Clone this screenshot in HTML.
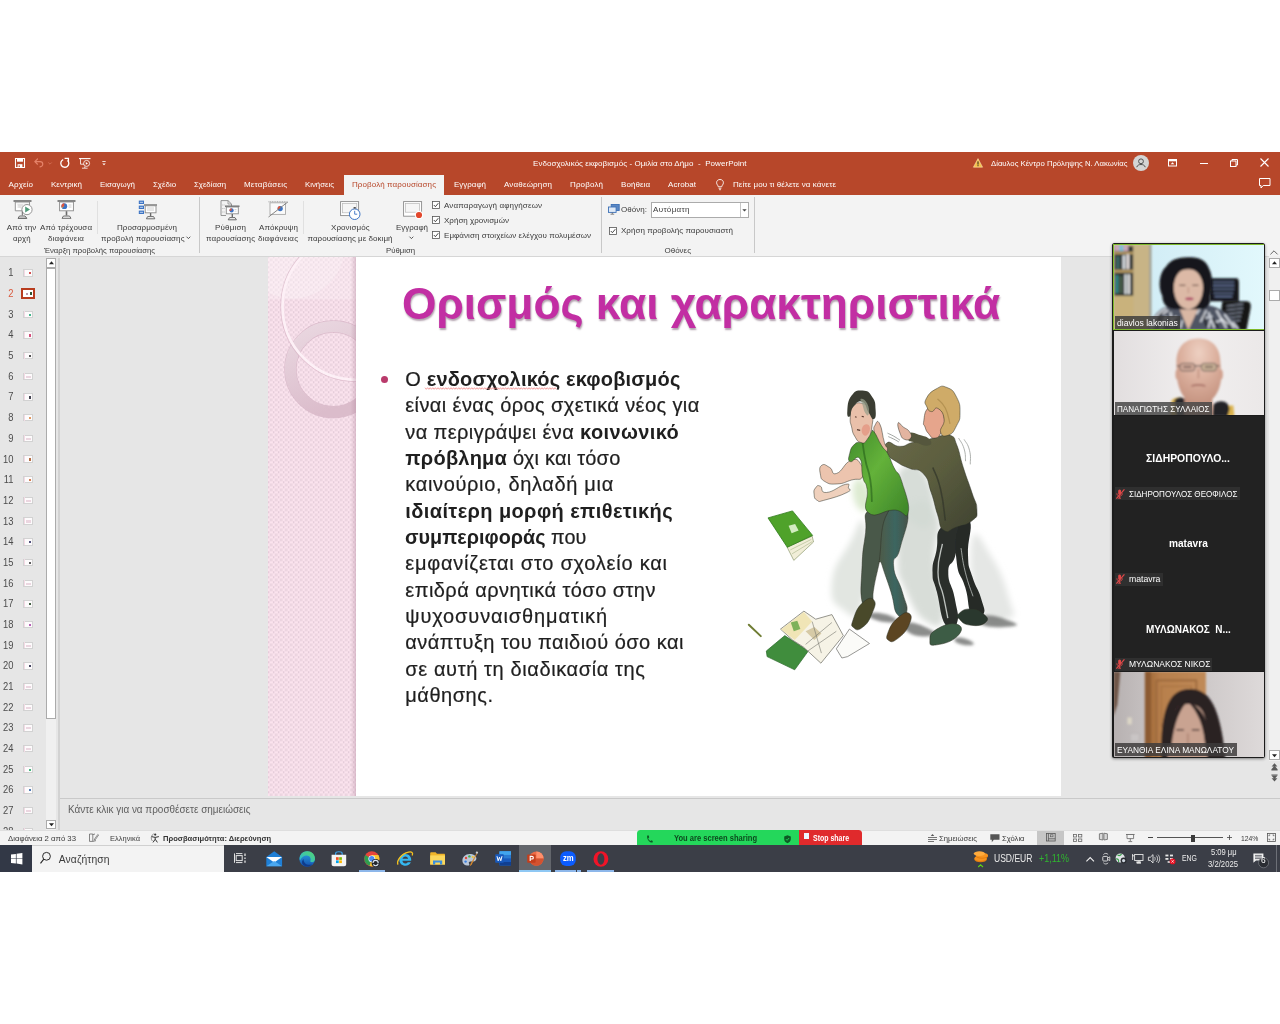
<!DOCTYPE html>
<html lang="el"><head><meta charset="utf-8"><title>Ενδοσχολικός εκφοβισμός - PowerPoint</title>
<style>
*{box-sizing:border-box;margin:0;padding:0}
html,body{width:1280px;height:1024px;background:#fff;overflow:hidden}
body{position:relative;font-family:"Liberation Sans",sans-serif;font-size:8px;color:#444}
.a{position:absolute;white-space:pre}
svg{overflow:visible}
b{-webkit-text-stroke:0}
</style></head><body>
<div class="a" id="root" style="left:0;top:0;width:1280px;height:1024px;will-change:transform">
<div class="a" style="left:0px;top:152px;width:1280px;height:43px;background:#b7472a;"></div>
<div class="a" style="left:0px;top:195px;width:1280px;height:61px;background:#f3f3f3;"></div>
<div class="a" style="left:0px;top:256px;width:1280px;height:574px;background:#e6e6e6;"></div>
<svg class="a" style="left:15px;top:158px;" width="10" height="10" viewBox="0 0 10 10"><path d="M0.5 0.5h9v9h-9z" fill="none" stroke="#fff" stroke-width="1.1"/><rect x="2" y="0.5" width="6" height="3.2" fill="#fff"/><rect x="2.6" y="6.2" width="4.8" height="3.3" fill="#fff"/><rect x="3.6" y="7.4" width="1.2" height="1.6" fill="#b7472a"/></svg>
<svg class="a" style="left:34px;top:158px;" width="11" height="10" viewBox="0 0 11 10"><path d="M3.5 1 L0.8 3.6 L3.5 6.2 M1 3.6 H6.2 C9.5 3.6 9.8 8.6 6 8.8" fill="none" stroke="#e58369" stroke-width="1.2" stroke-linecap="round" stroke-linejoin="round"/></svg>
<svg class="a" style="left:47.5px;top:161.5px;" width="4" height="3" viewBox="0 0 4 3"><path d="M0.3 0.5 L2 2.2 L3.7 0.5" fill="none" stroke="#d9775d" stroke-width="0.8"/></svg>
<svg class="a" style="left:60px;top:158px;" width="10" height="10" viewBox="0 0 10 10"><path d="M3.2 1.6 A4 4 0 1 0 7.6 2.4" fill="none" stroke="#fff" stroke-width="1.3"/><path d="M4.6 0.3 H8.4 V4.1" fill="none" stroke="#fff" stroke-width="1.3"/></svg>
<svg class="a" style="left:78.5px;top:158px;" width="12" height="11" viewBox="0 0 12 11"><path d="M0 0.6 H11.5" stroke="#fff" stroke-width="1.1"/><path d="M1.5 1 V6.2 H5" fill="none" stroke="#fff" stroke-width="0.8"/><circle cx="7.6" cy="5.4" r="3" fill="none" stroke="#fff" stroke-width="0.8"/><path d="M6.8 4 L9 5.4 L6.8 6.8z" fill="#fff"/><path d="M3 10.2 H8.6 M5.8 8.5 V10" stroke="#fff" stroke-width="0.8"/></svg>
<svg class="a" style="left:101.5px;top:160.5px;" width="4" height="6" viewBox="0 0 4 6"><path d="M0.3 0.5 H3.7" stroke="#fff" stroke-width="0.8"/><path d="M0.3 2.4 H3.7 L2 4.3z" fill="#fff"/></svg>
<div class="a" style="left:533.00px;top:159.53px;font-size:8px;line-height:8px;color:#fff;letter-spacing:0.049px;">Ενδοσχολικός εκφοβισμός - Ομιλία στο Δήμο  -  PowerPoint</div>
<svg class="a" style="left:972.5px;top:158px;" width="10" height="10" viewBox="0 0 10 10"><path d="M5 0.6 L9.6 9.2 H0.4z" fill="#f5c04a" stroke="#fff3c8" stroke-width="0.5"/><rect x="4.5" y="3.4" width="1" height="3.2" fill="#222"/><rect x="4.5" y="7.2" width="1" height="1" fill="#222"/></svg>
<div class="a" style="left:990.50px;top:159.53px;font-size:8px;line-height:8px;color:#fff;transform:scaleX(0.9667);transform-origin:0 0;">Δίαυλος Κέντρο Πρόληψης Ν. Λακωνίας</div>
<svg class="a" style="left:1133px;top:155px;" width="16" height="16" viewBox="0 0 16 16"><circle cx="8" cy="8" r="8" fill="#d4d4d4"/><circle cx="8" cy="6.3" r="2.4" fill="none" stroke="#444" stroke-width="0.9"/><path d="M3.8 12.2 C4.2 8.6 11.8 8.6 12.2 12.2" fill="none" stroke="#444" stroke-width="0.9"/></svg>
<svg class="a" style="left:1168px;top:158.5px;" width="9" height="8" viewBox="0 0 9 8"><rect x="0.5" y="0.5" width="8" height="6.5" fill="none" stroke="#fff" stroke-width="1"/><rect x="0.5" y="0.5" width="8" height="1.8" fill="#fff"/><path d="M4.5 3.2 L6.3 5.2 H2.7z" fill="#fff"/></svg>
<div class="a" style="left:1200px;top:162.5px;width:7.5px;height:1px;background:#fff;"></div>
<svg class="a" style="left:1230px;top:158.5px;" width="8" height="8" viewBox="0 0 8 8"><rect x="0.5" y="2" width="5.5" height="5.5" fill="none" stroke="#fff" stroke-width="1"/><path d="M2 2 V0.5 H7.5 V6 H6" fill="none" stroke="#fff" stroke-width="1"/></svg>
<svg class="a" style="left:1260px;top:158px;" width="9" height="9" viewBox="0 0 9 9"><path d="M0.5 0.5 L8.5 8.5 M8.5 0.5 L0.5 8.5" stroke="#fff" stroke-width="1.1"/></svg>
<svg class="a" style="left:1258.5px;top:178px;" width="12" height="11" viewBox="0 0 12 11"><path d="M0.5 0.5 H11 V7.5 H4.2 L2 10 V7.5 H0.5z" fill="none" stroke="#fff" stroke-width="1"/></svg>
<div class="a" style="left:344px;top:175px;width:100px;height:20.5px;background:#f3f3f3;"></div>
<div class="a" style="left:8.50px;top:181.23px;font-size:8px;line-height:8px;color:#fff;letter-spacing:0.124px;">Αρχείο</div>
<div class="a" style="left:51.00px;top:181.23px;font-size:8px;line-height:8px;color:#fff;letter-spacing:0.023px;">Κεντρική</div>
<div class="a" style="left:100.00px;top:181.23px;font-size:8px;line-height:8px;color:#fff;transform:scaleX(0.9895);transform-origin:0 0;">Εισαγωγή</div>
<div class="a" style="left:153.00px;top:181.23px;font-size:8px;line-height:8px;color:#fff;transform:scaleX(0.9833);transform-origin:0 0;">Σχέδιο</div>
<div class="a" style="left:194.00px;top:181.23px;font-size:8px;line-height:8px;color:#fff;transform:scaleX(0.9711);transform-origin:0 0;">Σχεδίαση</div>
<div class="a" style="left:244.00px;top:181.23px;font-size:8px;line-height:8px;color:#fff;letter-spacing:0.193px;">Μεταβάσεις</div>
<div class="a" style="left:305.00px;top:181.23px;font-size:8px;line-height:8px;color:#fff;transform:scaleX(0.9765);transform-origin:0 0;">Κινήσεις</div>
<div class="a" style="left:454.00px;top:181.23px;font-size:8px;line-height:8px;color:#fff;transform:scaleX(0.9954);transform-origin:0 0;">Εγγραφή</div>
<div class="a" style="left:504.00px;top:181.23px;font-size:8px;line-height:8px;color:#fff;letter-spacing:0.171px;">Αναθεώρηση</div>
<div class="a" style="left:570.00px;top:181.23px;font-size:8px;line-height:8px;color:#fff;letter-spacing:0.146px;">Προβολή</div>
<div class="a" style="left:621.00px;top:181.23px;font-size:8px;line-height:8px;color:#fff;letter-spacing:0.058px;">Βοήθεια</div>
<div class="a" style="left:668.00px;top:181.23px;font-size:8px;line-height:8px;color:#fff;letter-spacing:0.072px;">Acrobat</div>
<div class="a" style="left:733.00px;top:181.23px;font-size:8px;line-height:8px;color:#fff;letter-spacing:0.068px;">Πείτε μου τι θέλετε να κάνετε</div>
<div class="a" style="left:352.00px;top:181.23px;font-size:8px;line-height:8px;color:#b7472a;letter-spacing:0.092px;">Προβολή παρουσίασης</div>
<svg class="a" style="left:715.5px;top:178.5px;" width="8" height="12" viewBox="0 0 8 12"><path d="M4 0.5 C1.8 0.5 0.6 2 0.6 3.7 C0.6 5.4 2 6.2 2.3 7.8 H5.7 C6 6.2 7.4 5.4 7.4 3.7 C7.4 2 6.2 0.5 4 0.5z" fill="none" stroke="#fff" stroke-width="0.9"/><path d="M2.6 9.3 H5.4 M3 10.7 H5" stroke="#fff" stroke-width="0.8"/></svg>
<div class="a" style="left:0px;top:255.5px;width:1280px;height:1px;background:#d6d6d6;"></div>
<div class="a" style="left:96.5px;top:201px;width:1px;height:33px;background:#e0e0e0;"></div>
<div class="a" style="left:198.5px;top:197px;width:1px;height:56px;background:#c8c8c8;"></div>
<div class="a" style="left:302.5px;top:201px;width:1px;height:33px;background:#e0e0e0;"></div>
<div class="a" style="left:600.5px;top:197px;width:1px;height:56px;background:#c8c8c8;"></div>
<div class="a" style="left:753.5px;top:197px;width:1px;height:56px;background:#c8c8c8;"></div>
<div class="a" style="left:6.80px;top:223.83px;font-size:8px;line-height:8px;color:#3a3a3a;letter-spacing:0.061px;">Από την</div>
<div class="a" style="left:13.00px;top:235.03px;font-size:8px;line-height:8px;color:#3a3a3a;transform:scaleX(0.9818);transform-origin:0 0;">αρχή</div>
<div class="a" style="left:40.00px;top:223.83px;font-size:8px;line-height:8px;color:#3a3a3a;letter-spacing:0.075px;">Από τρέχουσα</div>
<div class="a" style="left:48.00px;top:235.03px;font-size:8px;line-height:8px;color:#3a3a3a;letter-spacing:0.170px;">διαφάνεια</div>
<div class="a" style="left:117.00px;top:223.83px;font-size:8px;line-height:8px;color:#3a3a3a;letter-spacing:0.041px;">Προσαρμοσμένη</div>
<div class="a" style="left:101.00px;top:235.03px;font-size:8px;line-height:8px;color:#3a3a3a;letter-spacing:0.079px;">προβολή παρουσίασης</div>
<svg class="a" style="left:186.2px;top:236.0px;" width="5" height="4" viewBox="0 0 5 4"><path d="M0.5 0.7 L2.4 2.6 L4.3 0.7" fill="none" stroke="#444" stroke-width="0.9"/></svg>
<div class="a" style="left:44.00px;top:247.03px;font-size:8px;line-height:8px;color:#3a3a3a;transform:scaleX(0.9599);transform-origin:0 0;">Έναρξη προβολής παρουσίασης</div>
<div class="a" style="left:215.00px;top:223.83px;font-size:8px;line-height:8px;color:#3a3a3a;letter-spacing:0.178px;">Ρύθμιση</div>
<div class="a" style="left:206.00px;top:235.03px;font-size:8px;line-height:8px;color:#3a3a3a;letter-spacing:0.101px;">παρουσίασης</div>
<div class="a" style="left:259.00px;top:223.83px;font-size:8px;line-height:8px;color:#3a3a3a;letter-spacing:0.088px;">Απόκρυψη</div>
<div class="a" style="left:258.00px;top:235.03px;font-size:8px;line-height:8px;color:#3a3a3a;letter-spacing:0.168px;">διαφάνειας</div>
<div class="a" style="left:331.00px;top:223.83px;font-size:8px;line-height:8px;color:#3a3a3a;letter-spacing:0.067px;">Χρονισμός</div>
<div class="a" style="left:307.50px;top:235.03px;font-size:8px;line-height:8px;color:#3a3a3a;letter-spacing:0.033px;">παρουσίασης με δοκιμή</div>
<div class="a" style="left:396.00px;top:223.83px;font-size:8px;line-height:8px;color:#3a3a3a;transform:scaleX(0.9954);transform-origin:0 0;">Εγγραφή</div>
<svg class="a" style="left:409px;top:235.8px;" width="5" height="4" viewBox="0 0 5 4"><path d="M0.5 0.7 L2.4 2.6 L4.3 0.7" fill="none" stroke="#444" stroke-width="0.9"/></svg>
<div class="a" style="left:385.50px;top:247.03px;font-size:8px;line-height:8px;color:#3a3a3a;transform:scaleX(0.9688);transform-origin:0 0;">Ρύθμιση</div>
<svg class="a" style="left:432.3px;top:200.6px;" width="8" height="8" viewBox="0 0 8 8"><rect x="0.5" y="0.5" width="7" height="7" fill="#fff" stroke="#555" stroke-width="0.8"/><path d="M1.8 4 L3.4 5.7 L6.3 2.2" fill="none" stroke="#333" stroke-width="0.9"/></svg>
<svg class="a" style="left:432.3px;top:216px;" width="8" height="8" viewBox="0 0 8 8"><rect x="0.5" y="0.5" width="7" height="7" fill="#fff" stroke="#555" stroke-width="0.8"/><path d="M1.8 4 L3.4 5.7 L6.3 2.2" fill="none" stroke="#333" stroke-width="0.9"/></svg>
<svg class="a" style="left:432.3px;top:231.4px;" width="8" height="8" viewBox="0 0 8 8"><rect x="0.5" y="0.5" width="7" height="7" fill="#fff" stroke="#555" stroke-width="0.8"/><path d="M1.8 4 L3.4 5.7 L6.3 2.2" fill="none" stroke="#333" stroke-width="0.9"/></svg>
<div class="a" style="left:444.00px;top:201.53px;font-size:8px;line-height:8px;color:#3a3a3a;letter-spacing:0.130px;">Αναπαραγωγή αφηγήσεων</div>
<div class="a" style="left:444.00px;top:216.93px;font-size:8px;line-height:8px;color:#3a3a3a;letter-spacing:0.020px;">Χρήση χρονισμών</div>
<div class="a" style="left:444.00px;top:232.33px;font-size:8px;line-height:8px;color:#3a3a3a;letter-spacing:0.064px;">Εμφάνιση στοιχείων ελέγχου πολυμέσων</div>
<svg class="a" style="left:608px;top:204px;" width="12" height="11" viewBox="0 0 12 11"><rect x="3.2" y="0.5" width="8" height="6" fill="#5b88c4" stroke="#3b6fb5" stroke-width="0.9"/><rect x="0.5" y="3" width="7.6" height="5.4" fill="#dfe9f6" stroke="#3b6fb5" stroke-width="0.9"/><path d="M2.5 10.2 H6.2 M4.3 8.6 V10" stroke="#666" stroke-width="0.8"/></svg>
<div class="a" style="left:621.00px;top:205.53px;font-size:8px;line-height:8px;color:#3a3a3a;letter-spacing:0.041px;">Οθόνη:</div>
<div class="a" style="left:650.5px;top:202.2px;width:98.5px;height:15.5px;background:#fff;border:1px solid #ababab"></div>
<div class="a" style="left:739.5px;top:203px;width:1px;height:14px;background:#c6c6c6;"></div>
<svg class="a" style="left:741.5px;top:208.5px;" width="5" height="3" viewBox="0 0 5 3"><path d="M0.3 0.3 H4.7 L2.5 2.6z" fill="#444"/></svg>
<div class="a" style="left:653.00px;top:205.53px;font-size:8px;line-height:8px;color:#3a3a3a;letter-spacing:0.334px;">Αυτόματη</div>
<svg class="a" style="left:609px;top:226.6px;" width="8" height="8" viewBox="0 0 8 8"><rect x="0.5" y="0.5" width="7" height="7" fill="#fff" stroke="#555" stroke-width="0.8"/><path d="M1.8 4 L3.4 5.7 L6.3 2.2" fill="none" stroke="#333" stroke-width="0.9"/></svg>
<div class="a" style="left:621.00px;top:226.83px;font-size:8px;line-height:8px;color:#3a3a3a;letter-spacing:0.033px;">Χρήση προβολής παρουσιαστή</div>
<div class="a" style="left:664.50px;top:247.03px;font-size:8px;line-height:8px;color:#3a3a3a;letter-spacing:-0.009px;">Οθόνες</div>
<svg class="a" style="left:12.5px;top:200px;" width="20" height="20" viewBox="0 0 20 20"><path d="M0.5 1 H18.5" stroke="#6a6a6a" stroke-width="1.6"/>
<path d="M2.3 2 V10.8 H9" fill="#fff" stroke="#8a8a8a" stroke-width="0.9"/><path d="M2.3 2 H16.5 V5" fill="none" stroke="#8a8a8a" stroke-width="0.9"/>
<path d="M4.5 5 H10 M4.5 7 H8.5" stroke="#c4c4c4" stroke-width="0.8"/>
<circle cx="14" cy="9.6" r="5.1" fill="#fff" stroke="#8a8a8a" stroke-width="0.9"/><path d="M12.2 6.6 L17 9.6 L12.2 12.6z" fill="#4e9a78"/>
<path d="M9.3 11.5 V15.5 M5 18.3 H13.8 M6.5 16 H12 L13.8 18.3 H5z" fill="none" stroke="#6a6a6a" stroke-width="1"/></svg>
<svg class="a" style="left:56.5px;top:200px;" width="20" height="20" viewBox="0 0 20 20"><path d="M0.5 1 H18.5" stroke="#6a6a6a" stroke-width="1.6"/>
<rect x="2.6" y="2" width="13.8" height="8.8" fill="#fff" stroke="#8a8a8a" stroke-width="0.9"/>
<circle cx="7.3" cy="6.2" r="2.9" fill="#3b73c4"/><path d="M7.3 6.2 L7.3 3.3 A2.9 2.9 0 0 0 4.6 7.3z" fill="#e2553a"/><path d="M7.3 6.2 L4.6 7.3 A2.9 2.9 0 0 0 5 8z" fill="#f2b43c"/>
<path d="M11.5 5 H14.5 M11.5 7 H14.5" stroke="#c4c4c4" stroke-width="0.8"/>
<path d="M9.5 11.2 V15.5" stroke="#6a6a6a" stroke-width="1.6"/><path d="M6.5 16 H12.5 L14 18.3 H5z" fill="none" stroke="#6a6a6a" stroke-width="1"/></svg>
<svg class="a" style="left:137.5px;top:200px;" width="20" height="20" viewBox="0 0 20 20"><rect x="0.8" y="0.6" width="5.2" height="3.4" fill="#3b73c4"/><rect x="0.8" y="5.6" width="5.2" height="3.4" fill="#3b73c4"/><rect x="0.8" y="10.6" width="5.2" height="3.4" fill="#3b73c4"/>
<path d="M1.8 2.3 H5 M1.8 7.3 H5 M1.8 12.3 H5" stroke="#fff" stroke-width="0.7"/>
<path d="M6 5 H19" stroke="#6a6a6a" stroke-width="1.3"/><rect x="7.2" y="5.8" width="10.8" height="7" fill="#fff" stroke="#8a8a8a" stroke-width="0.9"/>
<path d="M9 8 H16 M9 10 H16" stroke="#c4c4c4" stroke-width="0.8"/>
<path d="M12.6 13 V16" stroke="#6a6a6a" stroke-width="1.4"/><path d="M9.6 16.6 H15.6 L16.8 18.8 H8.4z" fill="none" stroke="#6a6a6a" stroke-width="1"/></svg>
<svg class="a" style="left:220px;top:199.5px;" width="20" height="21" viewBox="0 0 20 21"><path d="M1 0.6 H8 L11.5 4 V7" fill="none" stroke="#8a8a8a" stroke-width="0.9"/><path d="M1 0.6 V15.5 H6" fill="none" stroke="#8a8a8a" stroke-width="0.9"/><path d="M8 0.6 V4 H11.5" fill="none" stroke="#8a8a8a" stroke-width="0.8"/>
<path d="M2.5 5 H4.5 M2.5 8.5 H4.5 M2.5 12 H4.5" stroke="#8a8a8a" stroke-width="0.8" stroke-dasharray="0.8 0.8"/>
<path d="M5 6.2 H19.5" stroke="#6a6a6a" stroke-width="1.4"/><rect x="6.3" y="7" width="12" height="6.8" fill="#fff" stroke="#8a8a8a" stroke-width="0.9"/>
<circle cx="11.6" cy="10.4" r="2.1" fill="#3b73c4"/><path d="M11.6 10.4 V8.3 A2.1 2.1 0 0 0 9.6 11.1z" fill="#e2553a"/><path d="M14.5 9.5 H16.5 M14.5 11.2 H16.5" stroke="#c4c4c4" stroke-width="0.7"/>
<path d="M12.3 14 V17" stroke="#6a6a6a" stroke-width="1.4"/><path d="M9.6 17.6 H15 L16.4 19.8 H8.2z" fill="none" stroke="#6a6a6a" stroke-width="1"/></svg>
<svg class="a" style="left:268px;top:201px;" width="21" height="17" viewBox="0 0 21 17"><path d="M0.5 0.8 H19" stroke="#9a9a9a" stroke-width="1" stroke-dasharray="1 0.7"/><rect x="2" y="1.8" width="15.5" height="11.6" fill="#fafafa" stroke="#a8a8a8" stroke-width="0.9"/>
<circle cx="12.2" cy="7.6" r="2.6" fill="#3b73c4"/><path d="M12.2 7.6 V5 A2.6 2.6 0 0 0 9.7 8.4z" fill="#e2553a"/>
<path d="M0.5 16 L20 0.8" stroke="#777" stroke-width="0.9"/></svg>
<svg class="a" style="left:340px;top:201px;" width="22" height="20" viewBox="0 0 22 20"><rect x="0.6" y="0.6" width="18" height="14" fill="#fff" stroke="#8a8a8a" stroke-width="0.9"/><rect x="2.4" y="2.4" width="14.4" height="9.4" fill="#f6f6f6" stroke="#b8b8b8" stroke-width="0.7"/>
<circle cx="14.7" cy="13.2" r="5.3" fill="#fff" stroke="#3b73c4" stroke-width="1"/><path d="M14.7 9.8 V13.2 H17.2" fill="none" stroke="#3b73c4" stroke-width="0.9"/><rect x="13.6" y="6" width="2.2" height="1.6" fill="#555"/></svg>
<svg class="a" style="left:402.5px;top:201px;" width="22" height="19" viewBox="0 0 22 19"><rect x="0.6" y="0.6" width="18" height="14.6" fill="#fff" stroke="#8a8a8a" stroke-width="0.9"/><rect x="2.6" y="2.6" width="14" height="8.6" fill="#f6f6f6" stroke="#b8b8b8" stroke-width="0.7"/>
<circle cx="16" cy="14" r="4.2" fill="#fff"/><circle cx="16" cy="14" r="3.1" fill="#e2482d"/></svg>
<div class="a" style="left:0;top:256px;width:60px;height:574px;overflow:hidden">
<div class="a" style="left:0;width:13.4px;text-align:right;top:12.40px;font-size:10.2px;line-height:10.2px;color:#4c4c4c;transform:scaleX(0.92);transform-origin:100% 50%">1</div>
<div class="a" style="left:23.2px;top:13.30px;width:9.6px;height:7.4px;border:0.8px solid #d2d2d2;background:#fdfbfc"></div>
<div class="a" style="left:28.6px;top:16.30px;width:2.4px;height:2.2px;background:#c33;opacity:0.85"></div>
<div class="a" style="left:23.8px;top:13.90px;width:1.2px;height:6px;background:#f3d9e4"></div>
<div class="a" style="left:0;width:13.4px;text-align:right;top:33.08px;font-size:10.2px;line-height:10.2px;color:#d9593d;transform:scaleX(0.92);transform-origin:100% 50%">2</div>
<div class="a" style="left:21.2px;top:32.08px;width:13.6px;height:11.2px;border:2px solid #b83c1e;background:#fff"></div>
<div class="a" style="left:26px;top:36.58px;width:2px;height:2px;background:#b9a;"></div><div class="a" style="left:30px;top:36.38px;width:1.6px;height:2.4px;background:#353;"></div>
<div class="a" style="left:0;width:13.4px;text-align:right;top:53.76px;font-size:10.2px;line-height:10.2px;color:#4c4c4c;transform:scaleX(0.92);transform-origin:100% 50%">3</div>
<div class="a" style="left:23.2px;top:54.66px;width:9.6px;height:7.4px;border:0.8px solid #d2d2d2;background:#fdfbfc"></div>
<div class="a" style="left:28.6px;top:57.66px;width:2.4px;height:2.2px;background:#2a7;opacity:0.85"></div>
<div class="a" style="left:23.8px;top:55.26px;width:1.2px;height:6px;background:#f3d9e4"></div>
<div class="a" style="left:0;width:13.4px;text-align:right;top:74.44px;font-size:10.2px;line-height:10.2px;color:#4c4c4c;transform:scaleX(0.92);transform-origin:100% 50%">4</div>
<div class="a" style="left:23.2px;top:75.34px;width:9.6px;height:7.4px;border:0.8px solid #d2d2d2;background:#fdfbfc"></div>
<div class="a" style="left:28.6px;top:78.34px;width:2.4px;height:2.2px;background:#c36;opacity:0.85"></div>
<div class="a" style="left:23.8px;top:75.94px;width:1.2px;height:6px;background:#f3d9e4"></div>
<div class="a" style="left:0;width:13.4px;text-align:right;top:95.12px;font-size:10.2px;line-height:10.2px;color:#4c4c4c;transform:scaleX(0.92);transform-origin:100% 50%">5</div>
<div class="a" style="left:23.2px;top:96.02px;width:9.6px;height:7.4px;border:0.8px solid #d2d2d2;background:#fdfbfc"></div>
<div class="a" style="left:28.6px;top:99.02px;width:2.4px;height:2.2px;background:#333;opacity:0.85"></div>
<div class="a" style="left:23.8px;top:96.62px;width:1.2px;height:6px;background:#f3d9e4"></div>
<div class="a" style="left:0;width:13.4px;text-align:right;top:115.80px;font-size:10.2px;line-height:10.2px;color:#4c4c4c;transform:scaleX(0.92);transform-origin:100% 50%">6</div>
<div class="a" style="left:23.2px;top:116.70px;width:9.6px;height:7.4px;border:0.8px solid #d2d2d2;background:#fdfbfc"></div>
<div class="a" style="left:25.5px;top:119.70px;width:5px;height:2.2px;background:#e3c6d4;opacity:0.7"></div>
<div class="a" style="left:23.8px;top:117.30px;width:1.2px;height:6px;background:#f3d9e4"></div>
<div class="a" style="left:0;width:13.4px;text-align:right;top:136.48px;font-size:10.2px;line-height:10.2px;color:#4c4c4c;transform:scaleX(0.92);transform-origin:100% 50%">7</div>
<div class="a" style="left:23.2px;top:137.38px;width:9.6px;height:7.4px;border:0.8px solid #d2d2d2;background:#fdfbfc"></div>
<div class="a" style="left:28.6px;top:140.38px;width:2.4px;height:2.2px;background:#223;opacity:0.85"></div>
<div class="a" style="left:23.8px;top:137.98px;width:1.2px;height:6px;background:#f3d9e4"></div>
<div class="a" style="left:0;width:13.4px;text-align:right;top:157.16px;font-size:10.2px;line-height:10.2px;color:#4c4c4c;transform:scaleX(0.92);transform-origin:100% 50%">8</div>
<div class="a" style="left:23.2px;top:158.06px;width:9.6px;height:7.4px;border:0.8px solid #d2d2d2;background:#fdfbfc"></div>
<div class="a" style="left:28.6px;top:161.06px;width:2.4px;height:2.2px;background:#d84;opacity:0.85"></div>
<div class="a" style="left:23.8px;top:158.66px;width:1.2px;height:6px;background:#f3d9e4"></div>
<div class="a" style="left:0;width:13.4px;text-align:right;top:177.84px;font-size:10.2px;line-height:10.2px;color:#4c4c4c;transform:scaleX(0.92);transform-origin:100% 50%">9</div>
<div class="a" style="left:23.2px;top:178.74px;width:9.6px;height:7.4px;border:0.8px solid #d2d2d2;background:#fdfbfc"></div>
<div class="a" style="left:25.5px;top:181.74px;width:5px;height:2.2px;background:#e3c6d4;opacity:0.7"></div>
<div class="a" style="left:23.8px;top:179.34px;width:1.2px;height:6px;background:#f3d9e4"></div>
<div class="a" style="left:0;width:13.4px;text-align:right;top:198.52px;font-size:10.2px;line-height:10.2px;color:#4c4c4c;transform:scaleX(0.92);transform-origin:100% 50%">10</div>
<div class="a" style="left:23.2px;top:199.42px;width:9.6px;height:7.4px;border:0.8px solid #d2d2d2;background:#fdfbfc"></div>
<div class="a" style="left:28.6px;top:202.42px;width:2.4px;height:2.2px;background:#a52;opacity:0.85"></div>
<div class="a" style="left:23.8px;top:200.02px;width:1.2px;height:6px;background:#f3d9e4"></div>
<div class="a" style="left:0;width:13.4px;text-align:right;top:219.20px;font-size:10.2px;line-height:10.2px;color:#4c4c4c;transform:scaleX(0.92);transform-origin:100% 50%">11</div>
<div class="a" style="left:23.2px;top:220.10px;width:9.6px;height:7.4px;border:0.8px solid #d2d2d2;background:#fdfbfc"></div>
<div class="a" style="left:28.6px;top:223.10px;width:2.4px;height:2.2px;background:#c63;opacity:0.85"></div>
<div class="a" style="left:23.8px;top:220.70px;width:1.2px;height:6px;background:#f3d9e4"></div>
<div class="a" style="left:0;width:13.4px;text-align:right;top:239.88px;font-size:10.2px;line-height:10.2px;color:#4c4c4c;transform:scaleX(0.92);transform-origin:100% 50%">12</div>
<div class="a" style="left:23.2px;top:240.78px;width:9.6px;height:7.4px;border:0.8px solid #d2d2d2;background:#fdfbfc"></div>
<div class="a" style="left:25.5px;top:243.78px;width:5px;height:2.2px;background:#e3c6d4;opacity:0.7"></div>
<div class="a" style="left:23.8px;top:241.38px;width:1.2px;height:6px;background:#f3d9e4"></div>
<div class="a" style="left:0;width:13.4px;text-align:right;top:260.56px;font-size:10.2px;line-height:10.2px;color:#4c4c4c;transform:scaleX(0.92);transform-origin:100% 50%">13</div>
<div class="a" style="left:23.2px;top:261.46px;width:9.6px;height:7.4px;border:0.8px solid #d2d2d2;background:#fdfbfc"></div>
<div class="a" style="left:25.5px;top:264.46px;width:5px;height:2.2px;background:#e3c6d4;opacity:0.7"></div>
<div class="a" style="left:23.8px;top:262.06px;width:1.2px;height:6px;background:#f3d9e4"></div>
<div class="a" style="left:0;width:13.4px;text-align:right;top:281.24px;font-size:10.2px;line-height:10.2px;color:#4c4c4c;transform:scaleX(0.92);transform-origin:100% 50%">14</div>
<div class="a" style="left:23.2px;top:282.14px;width:9.6px;height:7.4px;border:0.8px solid #d2d2d2;background:#fdfbfc"></div>
<div class="a" style="left:28.6px;top:285.14px;width:2.4px;height:2.2px;background:#336;opacity:0.85"></div>
<div class="a" style="left:23.8px;top:282.74px;width:1.2px;height:6px;background:#f3d9e4"></div>
<div class="a" style="left:0;width:13.4px;text-align:right;top:301.92px;font-size:10.2px;line-height:10.2px;color:#4c4c4c;transform:scaleX(0.92);transform-origin:100% 50%">15</div>
<div class="a" style="left:23.2px;top:302.82px;width:9.6px;height:7.4px;border:0.8px solid #d2d2d2;background:#fdfbfc"></div>
<div class="a" style="left:28.6px;top:305.82px;width:2.4px;height:2.2px;background:#444;opacity:0.85"></div>
<div class="a" style="left:23.8px;top:303.42px;width:1.2px;height:6px;background:#f3d9e4"></div>
<div class="a" style="left:0;width:13.4px;text-align:right;top:322.60px;font-size:10.2px;line-height:10.2px;color:#4c4c4c;transform:scaleX(0.92);transform-origin:100% 50%">16</div>
<div class="a" style="left:23.2px;top:323.50px;width:9.6px;height:7.4px;border:0.8px solid #d2d2d2;background:#fdfbfc"></div>
<div class="a" style="left:25.5px;top:326.50px;width:5px;height:2.2px;background:#e3c6d4;opacity:0.7"></div>
<div class="a" style="left:23.8px;top:324.10px;width:1.2px;height:6px;background:#f3d9e4"></div>
<div class="a" style="left:0;width:13.4px;text-align:right;top:343.28px;font-size:10.2px;line-height:10.2px;color:#4c4c4c;transform:scaleX(0.92);transform-origin:100% 50%">17</div>
<div class="a" style="left:23.2px;top:344.18px;width:9.6px;height:7.4px;border:0.8px solid #d2d2d2;background:#fdfbfc"></div>
<div class="a" style="left:28.6px;top:347.18px;width:2.4px;height:2.2px;background:#242;opacity:0.85"></div>
<div class="a" style="left:23.8px;top:344.78px;width:1.2px;height:6px;background:#f3d9e4"></div>
<div class="a" style="left:0;width:13.4px;text-align:right;top:363.96px;font-size:10.2px;line-height:10.2px;color:#4c4c4c;transform:scaleX(0.92);transform-origin:100% 50%">18</div>
<div class="a" style="left:23.2px;top:364.86px;width:9.6px;height:7.4px;border:0.8px solid #d2d2d2;background:#fdfbfc"></div>
<div class="a" style="left:28.6px;top:367.86px;width:2.4px;height:2.2px;background:#a4a;opacity:0.85"></div>
<div class="a" style="left:23.8px;top:365.46px;width:1.2px;height:6px;background:#f3d9e4"></div>
<div class="a" style="left:0;width:13.4px;text-align:right;top:384.64px;font-size:10.2px;line-height:10.2px;color:#4c4c4c;transform:scaleX(0.92);transform-origin:100% 50%">19</div>
<div class="a" style="left:23.2px;top:385.54px;width:9.6px;height:7.4px;border:0.8px solid #d2d2d2;background:#fdfbfc"></div>
<div class="a" style="left:25.5px;top:388.54px;width:5px;height:2.2px;background:#e3c6d4;opacity:0.7"></div>
<div class="a" style="left:23.8px;top:386.14px;width:1.2px;height:6px;background:#f3d9e4"></div>
<div class="a" style="left:0;width:13.4px;text-align:right;top:405.32px;font-size:10.2px;line-height:10.2px;color:#4c4c4c;transform:scaleX(0.92);transform-origin:100% 50%">20</div>
<div class="a" style="left:23.2px;top:406.22px;width:9.6px;height:7.4px;border:0.8px solid #d2d2d2;background:#fdfbfc"></div>
<div class="a" style="left:28.6px;top:409.22px;width:2.4px;height:2.2px;background:#224;opacity:0.85"></div>
<div class="a" style="left:23.8px;top:406.82px;width:1.2px;height:6px;background:#f3d9e4"></div>
<div class="a" style="left:0;width:13.4px;text-align:right;top:426.00px;font-size:10.2px;line-height:10.2px;color:#4c4c4c;transform:scaleX(0.92);transform-origin:100% 50%">21</div>
<div class="a" style="left:23.2px;top:426.90px;width:9.6px;height:7.4px;border:0.8px solid #d2d2d2;background:#fdfbfc"></div>
<div class="a" style="left:25.5px;top:429.90px;width:5px;height:2.2px;background:#e3c6d4;opacity:0.7"></div>
<div class="a" style="left:23.8px;top:427.50px;width:1.2px;height:6px;background:#f3d9e4"></div>
<div class="a" style="left:0;width:13.4px;text-align:right;top:446.68px;font-size:10.2px;line-height:10.2px;color:#4c4c4c;transform:scaleX(0.92);transform-origin:100% 50%">22</div>
<div class="a" style="left:23.2px;top:447.58px;width:9.6px;height:7.4px;border:0.8px solid #d2d2d2;background:#fdfbfc"></div>
<div class="a" style="left:25.5px;top:450.58px;width:5px;height:2.2px;background:#e3c6d4;opacity:0.7"></div>
<div class="a" style="left:23.8px;top:448.18px;width:1.2px;height:6px;background:#f3d9e4"></div>
<div class="a" style="left:0;width:13.4px;text-align:right;top:467.36px;font-size:10.2px;line-height:10.2px;color:#4c4c4c;transform:scaleX(0.92);transform-origin:100% 50%">23</div>
<div class="a" style="left:23.2px;top:468.26px;width:9.6px;height:7.4px;border:0.8px solid #d2d2d2;background:#fdfbfc"></div>
<div class="a" style="left:25.5px;top:471.26px;width:5px;height:2.2px;background:#e3c6d4;opacity:0.7"></div>
<div class="a" style="left:23.8px;top:468.86px;width:1.2px;height:6px;background:#f3d9e4"></div>
<div class="a" style="left:0;width:13.4px;text-align:right;top:488.04px;font-size:10.2px;line-height:10.2px;color:#4c4c4c;transform:scaleX(0.92);transform-origin:100% 50%">24</div>
<div class="a" style="left:23.2px;top:488.94px;width:9.6px;height:7.4px;border:0.8px solid #d2d2d2;background:#fdfbfc"></div>
<div class="a" style="left:25.5px;top:491.94px;width:5px;height:2.2px;background:#e3c6d4;opacity:0.7"></div>
<div class="a" style="left:23.8px;top:489.54px;width:1.2px;height:6px;background:#f3d9e4"></div>
<div class="a" style="left:0;width:13.4px;text-align:right;top:508.72px;font-size:10.2px;line-height:10.2px;color:#4c4c4c;transform:scaleX(0.92);transform-origin:100% 50%">25</div>
<div class="a" style="left:23.2px;top:509.62px;width:9.6px;height:7.4px;border:0.8px solid #d2d2d2;background:#fdfbfc"></div>
<div class="a" style="left:28.6px;top:512.62px;width:2.4px;height:2.2px;background:#2a6;opacity:0.85"></div>
<div class="a" style="left:23.8px;top:510.22px;width:1.2px;height:6px;background:#f3d9e4"></div>
<div class="a" style="left:0;width:13.4px;text-align:right;top:529.40px;font-size:10.2px;line-height:10.2px;color:#4c4c4c;transform:scaleX(0.92);transform-origin:100% 50%">26</div>
<div class="a" style="left:23.2px;top:530.30px;width:9.6px;height:7.4px;border:0.8px solid #d2d2d2;background:#fdfbfc"></div>
<div class="a" style="left:28.6px;top:533.30px;width:2.4px;height:2.2px;background:#36a;opacity:0.85"></div>
<div class="a" style="left:23.8px;top:530.90px;width:1.2px;height:6px;background:#f3d9e4"></div>
<div class="a" style="left:0;width:13.4px;text-align:right;top:550.08px;font-size:10.2px;line-height:10.2px;color:#4c4c4c;transform:scaleX(0.92);transform-origin:100% 50%">27</div>
<div class="a" style="left:23.2px;top:550.98px;width:9.6px;height:7.4px;border:0.8px solid #d2d2d2;background:#fdfbfc"></div>
<div class="a" style="left:25.5px;top:553.98px;width:5px;height:2.2px;background:#e3c6d4;opacity:0.7"></div>
<div class="a" style="left:23.8px;top:551.58px;width:1.2px;height:6px;background:#f3d9e4"></div>
<div class="a" style="left:0;width:13.4px;text-align:right;top:570.76px;font-size:10.2px;line-height:10.2px;color:#4c4c4c;transform:scaleX(0.92);transform-origin:100% 50%">28</div>
<div class="a" style="left:23.2px;top:571.66px;width:9.6px;height:7.4px;border:0.8px solid #d2d2d2;background:#fdfbfc"></div>
<div class="a" style="left:25.5px;top:574.66px;width:5px;height:2.2px;background:#e3c6d4;opacity:0.7"></div>
<div class="a" style="left:23.8px;top:572.26px;width:1.2px;height:6px;background:#f3d9e4"></div>
</div>
<div class="a" style="left:46px;top:258px;width:10px;height:572px;background:#f0f0f0;"></div>
<div class="a" style="left:46px;top:258.2px;width:9.8px;height:9.5px;background:#fff;border:1px solid #ababab"></div>
<svg class="a" style="left:48.5px;top:261.2px;" width="5" height="3.4" viewBox="0 0 5 3.4"><path d="M0 3.2 L2.5 0.2 L5 3.2z" fill="#222"/></svg>
<div class="a" style="left:46px;top:267.6px;width:9.8px;height:451px;background:#fff;border:1px solid #ababab"></div>
<div class="a" style="left:46px;top:819.8px;width:9.8px;height:9.6px;background:#fff;border:1px solid #ababab"></div>
<svg class="a" style="left:48.5px;top:823.2px;" width="5" height="3.4" viewBox="0 0 5 3.4"><path d="M0 0.2 L2.5 3.2 L5 0.2z" fill="#222"/></svg>
<div class="a" style="left:58px;top:258px;width:1.5px;height:572px;background:#d2d2d2;"></div>
<div class="a" style="left:267.5px;top:256.5px;width:793.5px;height:539.5px;background:#fff;"></div>
<div class="a" style="left:267.5px;top:256.5px;width:88.5px;height:539.5px;overflow:hidden;background:#f3dbe6">
<svg class="a" style="left:0;top:0" width="88.5" height="539.5" viewBox="267.5 256.5 88.5 539.5">
<defs>
<linearGradient id="rg" x1="0" y1="0" x2="0.4" y2="1"><stop offset="0" stop-color="#ead8e1"/><stop offset="1" stop-color="#dbbccb"/></linearGradient>
<linearGradient id="hl" x1="0" y1="0" x2="0" y2="1"><stop offset="0" stop-color="#fff" stop-opacity="0.38"/><stop offset="1" stop-color="#fff" stop-opacity="0"/></linearGradient>
<linearGradient id="eg" x1="0" y1="0" x2="1" y2="0"><stop offset="0" stop-color="#b48aa0" stop-opacity="0"/><stop offset="1" stop-color="#b48aa0" stop-opacity="0.45"/></linearGradient>
<clipPath id="topc"><rect x="267" y="256" width="90" height="43"/></clipPath><clipPath id="bigc"><circle cx="355.4" cy="305.9" r="72.4"/></clipPath>
<pattern id="chk" patternUnits="userSpaceOnUse" x="2.4" y="0.9" width="5" height="5"><rect width="5" height="5" fill="#fbe3ee"/><rect x="1.85" y="2.2" width="2.8" height="2.6" fill="#ead2de"/><rect x="2.8" y="3.1" width="0.9" height="0.8" fill="#efd9e4"/><rect x="0" y="0" width="1.4" height="1.6" fill="#dcc4d2"/></pattern>
</defs>
<rect x="267" y="256" width="90" height="541" fill="url(#chk)"/>
<rect x="267" y="256" width="90" height="43" fill="#fff" opacity="0.22"/><circle cx="292" cy="246" r="52" fill="#fff" opacity="0.2" clip-path="url(#topc)"/>
<circle cx="332.7" cy="368.8" r="42.8" fill="none" stroke="#c9a3b6" stroke-width="12.4" opacity="0.55"/>
<circle cx="332.7" cy="368.8" r="42.8" fill="none" stroke="url(#rg)" stroke-width="11.2"/>
<circle cx="355.4" cy="305.9" r="74.9" fill="none" stroke="#cfa6ba" stroke-width="1.4" opacity="0.5"/>
<circle cx="355.4" cy="305.9" r="73.4" fill="none" stroke="#fdf0f6" stroke-width="2.7"/>
<rect x="350" y="256" width="6" height="540" fill="url(#eg)"/>
</svg></div>
<div class="a" style="left:401.80px;top:280.91px;font-size:45px;line-height:45px;color:#c22ea3;font-weight:700;transform:scaleX(0.9832);transform-origin:0 0;text-shadow:0.8px 1.6px 1.8px rgba(60,20,50,.4);">Ορισμός και χαρακτηριστικά</div>
<div class="a" style="left:380.9px;top:376.4px;width:7px;height:7px;border-radius:50%;background:#b93a6b"></div>
<div class="a" style="left:405.30px;top:368.97px;font-size:20px;line-height:20px;color:#1f1f1f;letter-spacing:0.170px;-webkit-text-stroke:0.22px #1f1f1f;">Ο <b>ενδοσχολικός εκφοβισμός</b></div>
<div class="a" style="left:405.30px;top:395.27px;font-size:20px;line-height:20px;color:#1f1f1f;letter-spacing:0.396px;-webkit-text-stroke:0.22px #1f1f1f;">είναι ένας όρος σχετικά νέος για</div>
<div class="a" style="left:405.30px;top:421.67px;font-size:20px;line-height:20px;color:#1f1f1f;letter-spacing:0.386px;-webkit-text-stroke:0.22px #1f1f1f;">να περιγράψει ένα <b>κοινωνικό</b></div>
<div class="a" style="left:405.30px;top:447.97px;font-size:20px;line-height:20px;color:#1f1f1f;letter-spacing:0.229px;-webkit-text-stroke:0.22px #1f1f1f;"><b>πρόβλημα</b> όχι και τόσο</div>
<div class="a" style="left:405.30px;top:474.37px;font-size:20px;line-height:20px;color:#1f1f1f;letter-spacing:0.658px;-webkit-text-stroke:0.22px #1f1f1f;">καινούριο, δηλαδή μια</div>
<div class="a" style="left:405.30px;top:500.67px;font-size:20px;line-height:20px;color:#1f1f1f;letter-spacing:0.393px;-webkit-text-stroke:0.22px #1f1f1f;"><b>ιδιαίτερη μορφή επιθετικής</b></div>
<div class="a" style="left:405.30px;top:527.07px;font-size:20px;line-height:20px;color:#1f1f1f;letter-spacing:0.000px;-webkit-text-stroke:0.22px #1f1f1f;transform:scaleX(0.9906);transform-origin:0 0;"><b>συμπεριφοράς</b> που</div>
<div class="a" style="left:405.30px;top:553.47px;font-size:20px;line-height:20px;color:#1f1f1f;letter-spacing:0.765px;-webkit-text-stroke:0.22px #1f1f1f;">εμφανίζεται στο σχολείο και</div>
<div class="a" style="left:405.30px;top:579.77px;font-size:20px;line-height:20px;color:#1f1f1f;letter-spacing:0.442px;-webkit-text-stroke:0.22px #1f1f1f;">επιδρά αρνητικά τόσο στην</div>
<div class="a" style="left:405.30px;top:606.07px;font-size:20px;line-height:20px;color:#1f1f1f;letter-spacing:0.882px;-webkit-text-stroke:0.22px #1f1f1f;">ψυχοσυναισθηματική</div>
<div class="a" style="left:405.30px;top:632.47px;font-size:20px;line-height:20px;color:#1f1f1f;letter-spacing:0.476px;-webkit-text-stroke:0.22px #1f1f1f;">ανάπτυξη του παιδιού όσο και</div>
<div class="a" style="left:405.30px;top:658.87px;font-size:20px;line-height:20px;color:#1f1f1f;letter-spacing:0.609px;-webkit-text-stroke:0.22px #1f1f1f;">σε αυτή τη διαδικασία της</div>
<div class="a" style="left:405.30px;top:685.17px;font-size:20px;line-height:20px;color:#1f1f1f;letter-spacing:0.529px;-webkit-text-stroke:0.22px #1f1f1f;">μάθησης.</div>
<svg class="a" style="left:0;top:0" width="1280" height="1024"><polyline points="425.0,387.7 426.3,389.3 427.6,387.7 428.9,389.3 430.2,387.7 431.5,389.3 432.8,387.7 434.1,389.3 435.4,387.7 436.7,389.3 438.0,387.7 439.3,389.3 440.6,387.7 441.9,389.3 443.2,387.7 444.5,389.3 445.8,387.7 447.1,389.3 448.4,387.7 449.7,389.3 451.0,387.7 452.3,389.3 453.6,387.7 454.9,389.3 456.2,387.7 457.5,389.3 458.8,387.7 460.1,389.3 461.4,387.7 462.7,389.3 464.0,387.7 465.3,389.3 466.6,387.7 467.9,389.3 469.2,387.7 470.5,389.3 471.8,387.7 473.1,389.3 474.4,387.7 475.7,389.3 477.0,387.7 478.3,389.3 479.6,387.7 480.9,389.3 482.2,387.7 483.5,389.3 484.8,387.7 486.1,389.3 487.4,387.7 488.7,389.3 490.0,387.7 491.3,389.3 492.6,387.7 493.9,389.3 495.2,387.7 496.5,389.3 497.8,387.7 499.1,389.3 500.4,387.7 501.7,389.3 503.0,387.7 504.3,389.3 505.6,387.7 506.9,389.3 508.2,387.7 509.5,389.3 510.8,387.7 512.1,389.3 513.4,387.7 514.7,389.3 516.0,387.7 517.3,389.3 518.6,387.7 519.9,389.3 521.2,387.7 522.5,389.3 523.8,387.7 525.1,389.3 526.4,387.7 527.7,389.3 529.0,387.7 530.3,389.3 531.6,387.7 532.9,389.3 534.2,387.7 535.5,389.3 536.8,387.7 538.1,389.3 539.4,387.7 540.7,389.3 542.0,387.7 543.3,389.3 544.6,387.7 545.9,389.3 547.2,387.7 548.5,389.3 549.8,387.7 551.1,389.3 552.4,387.7 553.7,389.3 555.0,387.7 556.3,389.3" fill="none" stroke="#f07a7a" stroke-width="0.7"/></svg>
<svg class="a" style="left:730px;top:370px" width="331" height="320" viewBox="730 370 331 320">
<defs><filter id="ib1" x="-10%" y="-10%" width="120%" height="120%"><feGaussianBlur stdDeviation="0.55"/></filter>
<filter id="ib3" x="-30%" y="-30%" width="160%" height="160%"><feGaussianBlur stdDeviation="3.2"/></filter>
<filter id="ib2" x="-30%" y="-30%" width="160%" height="160%"><feGaussianBlur stdDeviation="1.4"/></filter>
<linearGradient id="gsh" x1="0" y1="0" x2="1" y2="1"><stop offset="0" stop-color="#3f8a2a"/><stop offset="0.45" stop-color="#64b23a"/><stop offset="1" stop-color="#3c8428"/></linearGradient>
<linearGradient id="gjk" x1="0" y1="0" x2="1" y2="1"><stop offset="0" stop-color="#6a6a48"/><stop offset="0.5" stop-color="#5a5c3e"/><stop offset="1" stop-color="#3e4230"/></linearGradient>
<linearGradient id="gp1" x1="0" y1="0" x2="1" y2="0"><stop offset="0" stop-color="#4e5a48"/><stop offset="0.55" stop-color="#3c6660"/><stop offset="1" stop-color="#46544a"/></linearGradient>
</defs>
<g filter="url(#ib3)">
<path d="M906.3 508.8 C917.3 497.1 928.9 497.2 936.9 513.1 C944.9 529.1 932.9 537.5 934.7 565.6 C936.5 593.8 945.3 597.8 943.5 613.8 C941.6 629.7 938.6 628.6 928.1 622.5 C917.7 616.4 914.8 610.9 906.3 591.9 C897.7 572.9 897.5 578.0 897.5 554.7 C897.5 531.4 895.2 520.4 906.3 508.8z" fill="#d6dbd6" opacity=".95"/>
<path d="M849.4 543.8 C858.6 527.8 861.0 509.7 864.7 526.3 C868.4 542.8 868.6 579.5 862.5 602.8 C856.4 626.1 851.4 614.9 842.8 609.4 C834.2 603.9 830.0 601.5 831.9 583.1 C833.7 564.8 840.2 559.7 849.4 543.8z" fill="#dfe3de" opacity=".9"/>
<path d="M971.9 539.4 C975.0 524.7 981.2 540.3 991.6 556.9 C1002.0 573.4 1004.2 581.3 1009.1 598.4 C1014.0 615.6 1017.1 615.1 1009.1 618.1 C1001.1 621.2 991.1 631.4 980.6 609.4 C970.2 587.3 968.8 554.1 971.9 539.4z" fill="#e2e4e2" opacity=".9"/>
<path d="M903.1 467.5 C910.1 463.1 916.7 458.9 925.0 473.8 C933.3 488.6 937.2 507.5 932.8 520.6 C928.4 533.8 918.6 529.4 909.4 520.6 C900.2 511.9 901.8 504.2 900.0 489.4 C898.2 474.5 896.1 471.9 903.1 467.5z" fill="#d3d9d4" opacity=".9"/>
<path d="M854.7 481.6 C857.8 476.3 863.2 478.8 867.2 486.2 C871.1 493.7 871.8 502.9 868.8 508.1 C865.7 513.4 860.2 512.4 856.2 505.0 C852.3 497.6 851.6 486.8 854.7 481.6z" fill="#d4e6c6" opacity=".8"/>
</g>
<g filter="url(#ib2)">
<path d="M873.5 612.7 C879.6 612.4 888.2 614.3 893.1 617.0 C898.0 619.8 897.1 622.2 891.0 622.5 C884.8 622.8 876.2 620.9 871.3 618.1 C866.4 615.4 867.3 613.0 873.5 612.7z" fill="#6e706e" opacity=".8"/>
<path d="M908.5 622.5 C914.9 621.9 926.4 627.0 932.5 630.8 C938.6 634.6 936.8 635.5 930.3 636.1 C923.9 636.7 915.7 636.8 909.5 633.0 C903.4 629.2 902.0 623.1 908.5 622.5z" fill="#6e706e" opacity=".8"/>
<path d="M958.8 637.4 C963.2 637.3 968.8 639.6 971.9 641.8 C975.0 644.0 974.1 645.1 969.7 645.3 C965.3 645.4 959.2 644.4 956.1 642.2 C953.1 640.0 954.4 637.5 958.8 637.4z" fill="#6e706e" opacity=".8"/>
<path d="M984.6 615.5 C992.7 614.5 1003.8 618.6 1011.3 621.6 C1018.7 624.7 1019.4 625.5 1011.3 626.4 C1003.2 627.4 989.9 628.2 982.4 625.1 C974.9 622.1 976.5 616.5 984.6 615.5z" fill="#6e706e" opacity=".8"/>
</g>
<g filter="url(#ib1)">
<path d="M941.3 527.3 C947.8 520.3 955.9 517.5 959.9 525.2 C963.8 532.8 958.7 541.5 955.5 554.7 C952.2 567.9 948.5 559.9 948.3 572.2 C948.1 584.4 952.4 584.2 954.8 598.4 C957.3 612.7 959.6 615.5 957.0 622.9 C954.4 630.4 951.3 633.8 945.6 625.1 C940.0 616.4 940.6 606.7 936.9 591.9 C933.2 577.1 932.6 583.8 932.5 572.2 C932.4 560.6 934.0 562.9 936.5 550.3 C938.9 537.8 934.7 534.4 941.3 527.3z" fill="#2b2f2c"/>
<path d="M958.8 525.8 C962.6 514.7 967.6 513.4 970.1 521.4 C972.7 529.5 967.3 539.3 968.0 554.7 C968.6 570.1 968.7 564.3 972.3 576.6 C976.0 588.8 978.0 587.9 981.1 598.4 C984.1 609.0 985.8 609.8 983.3 614.2 C980.7 618.6 976.9 621.7 971.9 614.2 C966.9 606.7 969.6 602.3 965.3 587.5 C961.0 572.7 958.4 578.5 956.6 561.3 C954.7 544.0 955.0 537.0 958.8 525.8z" fill="#262a28"/>
<path d="M942.4 543.8 C941.1 551.7 937.7 557.5 938.0 572.2 C938.3 586.9 940.7 583.4 943.5 596.3 C946.2 609.1 946.6 612.0 947.8 618.1" fill="none" stroke="#e4e8e4" stroke-width="1.3" opacity=".8"/>
<path d="M961.0 548.1 C962.2 554.9 962.0 558.7 965.3 572.2 C968.7 585.7 970.8 589.5 973.0 596.3" fill="none" stroke="#cfd4cf" stroke-width="1" opacity=".7"/>
<path d="M929.9 640.5 C929.9 636.0 929.3 633.6 936.9 629.1 C944.5 624.5 951.3 622.3 957.0 624.3 C962.8 626.2 963.1 630.3 957.5 636.1 C951.8 641.8 944.6 643.6 936.9 644.8 C929.2 646.1 929.9 644.9 929.9 640.5z" fill="#3e5c44" stroke="#2a2e24" stroke-width="0.7" stroke-opacity="0.7"/>
<path d="M958.3 614.2 C961.4 611.5 962.7 609.1 969.7 608.9 C976.7 608.8 978.9 610.0 983.3 613.8 C987.7 617.6 989.3 619.3 985.5 622.5 C981.7 625.7 977.2 626.2 969.7 625.1 C962.2 624.0 962.0 621.6 958.8 618.6 C955.6 615.5 955.3 616.9 958.3 614.2z" fill="#2c382e" stroke="#2a2e24" stroke-width="0.7" stroke-opacity="0.7"/>
<path d="M868.6 510.5 C875.4 504.9 886.3 499.7 889.6 512.7 C892.9 525.7 884.9 535.9 880.5 556.9 C876.0 577.8 876.3 574.5 873.9 587.5 C871.4 600.5 874.9 598.8 871.7 603.3 C868.5 607.7 865.2 613.8 862.5 603.3 C859.8 592.7 861.2 585.4 862.1 565.6 C862.9 545.9 863.7 548.3 865.6 532.8 C867.4 517.4 861.9 516.1 868.6 510.5z" fill="#4a5848" stroke="#2a2e24" stroke-width="0.7" stroke-opacity="0.7"/>
<path d="M887.9 512.3 C895.5 499.8 903.7 500.0 907.1 510.1 C910.6 520.1 903.9 532.6 900.1 548.1 C896.3 563.7 893.0 553.4 893.6 565.6 C894.2 577.9 898.7 578.9 902.3 591.9 C906.0 604.9 908.1 605.6 906.7 612.0 C905.4 618.4 901.9 620.3 897.5 614.6 C893.1 609.0 895.2 605.6 891.0 591.9 C886.7 578.2 885.3 576.0 882.2 565.6 C879.1 555.2 878.4 569.6 880.0 554.7 C881.6 539.7 880.3 524.7 887.9 512.3z" fill="url(#gp1)" stroke="#2a2e24" stroke-width="0.7" stroke-opacity="0.7"/>
<path d="M853.3 619.2 C855.8 612.2 856.8 608.2 862.5 602.8 C868.3 597.5 871.3 597.0 873.9 600.2 C876.5 603.4 874.9 606.6 871.7 614.2 C868.5 621.8 867.5 623.5 862.5 627.3 C857.5 631.1 856.3 630.0 853.8 627.8 C851.2 625.5 850.9 626.2 853.3 619.2z" fill="#48492a" stroke="#2a2e24" stroke-width="0.7" stroke-opacity="0.7"/>
<path d="M888.3 631.7 C890.8 625.5 891.8 623.3 897.5 618.1 C903.3 613.0 905.7 611.4 908.9 613.3 C912.1 615.3 912.0 618.2 908.9 625.1 C905.8 632.1 903.6 634.0 898.0 638.3 C892.3 642.6 891.5 642.3 888.8 640.5 C886.1 638.6 885.9 637.9 888.3 631.7z" fill="#5c4522" stroke="#2a2e24" stroke-width="0.7" stroke-opacity="0.7"/>
<path d="M887.5 442.5 C891.0 440.5 893.0 446.4 900.0 446.4 C907.0 446.4 904.2 444.6 912.5 442.5 C920.8 440.4 922.2 440.8 929.7 439.1 C937.1 437.3 933.2 437.3 939.1 436.2 C945.0 435.2 945.8 432.8 950.8 435.5 C955.8 438.1 953.5 436.7 957.0 445.6 C960.5 454.6 959.1 454.4 963.3 467.5 C967.4 480.6 968.1 480.7 971.9 492.5 C975.7 504.3 976.8 501.8 976.9 509.7 C977.0 517.6 978.0 515.7 972.2 520.6 C966.4 525.5 964.2 524.5 956.2 527.2 C948.3 529.9 949.0 533.9 943.8 530.3 C938.5 526.7 941.0 525.0 937.5 514.4 C934.0 503.8 935.2 503.9 931.2 492.5 C927.3 481.1 929.6 480.5 923.4 473.8 C917.3 467.0 916.8 471.6 909.4 468.3 C901.9 465.0 903.0 466.2 896.9 462.0 C890.8 457.9 890.1 458.9 887.5 453.4 C884.9 448.0 884.0 444.5 887.5 442.5z" fill="url(#gjk)" stroke="#2a2e24" stroke-width="0.7" stroke-opacity="0.7"/>
<path d="M932.8 467.5 C935.0 473.6 937.1 474.5 940.6 489.4 C944.1 504.2 944.0 511.9 945.3 520.6" fill="none" stroke="#34382a" stroke-width="1.6" opacity=".8"/>
<path d="M909.4 433.1 C912.4 431.8 913.1 432.9 918.8 434.7 C924.4 436.4 927.1 436.3 929.7 439.4 C932.3 442.4 932.1 444.8 928.1 445.6 C924.2 446.5 921.3 444.2 915.6 442.5 C909.9 440.8 909.6 442.0 907.8 439.4 C906.1 436.8 906.3 434.4 909.4 433.1z" fill="#55573c"/>
<path d="M875.0 425.3 C876.5 422.7 877.1 418.9 879.7 423.8 C882.3 428.6 882.2 435.5 884.4 442.5 C886.6 449.5 887.5 446.1 887.5 448.8 C887.5 451.4 887.0 452.8 884.4 451.9 C881.8 451.0 880.9 450.9 878.1 445.6 C875.3 440.4 875.2 438.8 874.4 433.1 C873.5 427.4 873.5 427.9 875.0 425.3z" fill="#e7b9a4" stroke="#2a2e24" stroke-width="0.7" stroke-opacity="0.7"/>
<path d="M898.1 423.0 C899.0 421.2 900.0 424.5 903.1 426.9 C906.3 429.3 907.2 428.5 909.4 431.6 C911.6 434.6 912.2 435.6 910.9 437.8 C909.6 440.0 907.8 440.7 904.7 439.4 C901.6 438.1 901.8 437.7 900.0 433.1 C898.2 428.5 897.2 424.7 898.1 423.0z" fill="#e3b4a0" stroke="#2a2e24" stroke-width="0.7" stroke-opacity="0.7"/>
<path d="M887.5 433.1 C889.2 434.0 890.2 434.3 893.8 436.2 C897.2 438.2 898.2 439.1 900.0 440.2 M888.3 436.6 C889.8 437.3 890.8 437.6 893.8 439.1 C896.7 440.6 897.4 441.1 898.8 441.9" fill="none" stroke="#8a8e8a" stroke-width="1" opacity=".8"/>
<path d="M958.6 438.1 C960.1 441.1 962.1 442.3 964.1 448.8 C966.0 455.2 965.2 457.8 965.6 461.2 M964.1 439.4 C965.6 442.4 967.8 443.3 969.5 450.3 C971.3 457.3 970.1 460.4 970.3 464.4" fill="none" stroke="#9a9e9a" stroke-width="1" opacity=".8"/>
<path d="M923.8 420.9 C924.6 415.7 924.3 411.9 928.1 408.1 C932.0 404.4 932.9 404.4 937.5 407.5 C942.1 410.6 943.4 412.2 944.5 419.1 C945.6 425.9 944.2 426.5 941.4 431.9 C938.6 437.2 938.3 437.7 934.7 438.1 C931.1 438.6 931.1 436.6 928.4 433.4 C925.7 430.3 926.3 430.4 925.0 426.9 C923.7 423.4 922.9 426.2 923.8 420.9z" fill="#e6a58c" stroke="#2a2e24" stroke-width="0.7" stroke-opacity="0.7"/>
<path d="M926.2 398.8 C928.8 393.8 930.2 392.2 935.9 389.1 C941.7 385.9 941.1 385.2 946.9 387.5 C952.6 389.8 952.9 390.1 956.6 397.2 C960.2 404.3 960.0 404.9 960.0 412.8 C960.0 420.8 959.7 419.4 956.6 425.6 C953.4 431.8 953.2 433.2 948.8 435.0 C944.3 436.8 941.9 436.6 940.6 432.2 C939.3 427.7 944.9 425.7 944.1 419.1 C943.3 412.4 941.3 410.5 937.8 408.4 C934.3 406.3 934.6 412.0 931.6 411.6 C928.5 411.1 928.4 410.5 926.9 406.9 C925.4 403.3 923.7 403.7 926.2 398.8z" fill="#cfab68" stroke="#2a2e24" stroke-width="0.7" stroke-opacity="0.7"/>
<path d="M937.5 398.8 C939.7 401.4 941.8 401.1 945.3 408.1 C948.8 415.1 948.7 419.4 950.0 423.8" fill="none" stroke="#a88848" stroke-width="1.2" opacity=".7"/>
<path d="M850.8 460.5 C844.0 463.0 842.6 471.5 836.7 473.4 C830.8 475.4 833.8 469.8 829.7 467.5 C825.5 465.2 824.5 463.4 821.9 465.2 C819.2 466.9 819.4 469.2 820.3 473.8 C821.2 478.3 820.2 478.7 825.0 481.6 C829.8 484.4 830.1 484.3 837.5 483.9 C844.9 483.5 844.6 482.0 851.6 480.0 C858.6 478.0 859.9 481.2 862.5 476.9 C865.1 472.5 864.2 469.0 860.9 464.4 C857.7 459.8 857.6 457.9 850.8 460.5z" fill="#ecc4ae" stroke="#2a2e24" stroke-width="0.7" stroke-opacity="0.7"/>
<path d="M815.6 487.8 C817.4 485.6 817.2 484.9 820.3 486.2 C823.4 487.6 819.6 493.0 826.6 492.5 C833.6 492.0 839.2 485.7 845.3 484.4 C851.4 483.1 848.0 485.5 848.4 487.8 C848.9 490.1 853.4 489.1 846.9 492.5 C840.3 495.9 833.3 497.8 825.0 500.0 C816.7 502.2 820.2 502.0 817.2 500.3 C814.1 498.6 814.5 497.6 814.1 494.1 C813.6 490.6 813.9 490.0 815.6 487.8z" fill="#efd0bc" stroke="#2a2e24" stroke-width="0.7" stroke-opacity="0.7"/>
<path d="M862.5 441.2 C866.9 438.3 867.2 436.1 870.3 433.4 C873.5 430.7 870.6 428.1 873.8 431.6 C876.9 435.0 877.6 439.4 881.6 445.6 C885.5 451.8 884.3 447.5 887.8 453.8 C891.3 460.0 890.1 459.9 894.1 467.8 C898.0 475.7 897.9 469.2 901.9 481.9 C905.8 494.6 910.4 505.2 908.1 513.1 C905.9 521.0 904.8 510.0 893.8 510.0 C882.7 510.0 876.2 518.9 868.8 513.1 C861.3 507.4 868.9 499.4 867.2 489.4 C865.5 479.3 864.9 485.9 862.8 477.2 C860.7 468.5 863.2 462.8 859.7 458.4 C856.2 454.1 853.1 463.0 850.3 461.6 C847.5 460.2 848.5 458.3 849.7 453.4 C850.9 448.5 851.1 447.5 854.7 444.1 C858.3 440.6 858.1 444.2 862.5 441.2z" fill="url(#gsh)" stroke="#2a2e24" stroke-width="0.7" stroke-opacity="0.7"/>
<path d="M862.5 442.5 C863.4 447.8 863.4 450.8 865.6 461.2 C867.8 471.8 868.6 468.6 870.3 480.0 C872.1 491.4 871.4 495.8 871.9 501.9" fill="none" stroke="#2c6a1e" stroke-width="1.8" opacity=".7"/>
<path d="M850.3 417.5 C850.8 411.8 849.7 410.5 853.1 406.6 C856.5 402.6 857.5 402.1 862.5 403.4 C867.5 404.8 868.5 404.7 871.1 411.2 C873.7 417.8 873.0 419.0 871.9 426.9 C870.8 434.8 870.2 435.0 867.2 439.4 C864.1 443.8 864.4 443.4 860.9 442.5 C857.4 441.6 857.3 440.6 854.7 436.2 C852.1 431.9 852.8 432.1 851.6 426.9 C850.3 421.6 849.9 423.2 850.3 417.5z" fill="#e9c0aa" stroke="#2a2e24" stroke-width="0.7" stroke-opacity="0.7"/>
<path d="M862.5 426.9 C864.0 424.2 867.0 423.6 868.8 425.3 C870.5 427.1 870.3 430.5 868.8 433.1 C867.2 435.8 865.0 436.4 863.3 434.7 C861.5 432.9 861.0 429.5 862.5 426.9z" fill="#e39682" opacity=".8"/>
<path d="M847.3 411.2 C847.8 405.5 847.3 401.4 851.6 395.6 C855.8 389.9 856.7 390.3 862.5 390.6 C868.3 391.0 868.5 391.5 872.2 396.9 C875.9 402.2 875.2 403.5 875.6 409.7 C876.1 415.9 875.7 418.2 873.8 419.1 C871.8 419.9 871.9 417.6 868.8 412.8 C865.6 408.0 866.8 403.6 862.5 401.9 C858.2 400.1 856.9 402.5 853.4 406.6 C849.9 410.6 851.7 414.9 850.0 416.2 C848.3 417.6 846.9 417.0 847.3 411.2z" fill="#3b3e33"/>
<path d="M860.9 398.8 C862.2 398.3 865.0 399.3 867.2 403.4 C869.4 407.6 869.2 410.8 868.8 413.6 C868.3 416.4 867.4 416.0 865.6 413.6 C863.9 411.2 863.8 409.2 862.5 405.0 C861.2 400.8 859.6 399.2 860.9 398.8z" fill="#9aa08c" opacity=".75"/>
<path d="M855.0 416.7 L856.6 417.2 M861.7 416.2 L863.8 416.9 M857.0 429.7 L860.2 430.3" stroke="#5a3a30" stroke-width="1.2" fill="none"/>
<path d="M787.0 547.0 L812.2 536.1 L813.5 542.0 L793.8 560.4z" fill="#f1eed8" stroke="#7a8a5a" stroke-width="0.6"/>
<path d="M790.3 549.9 L811.3 539.4 M792.1 553.8 L812.2 541.6" stroke="#a9b58c" stroke-width="0.6" fill="none"/>
<path d="M768.0 517.9 L792.5 510.9 L812.6 535.4 L787.3 547.3z" fill="#4fa22a" stroke="#2f7a1c" stroke-width="0.8"/>
<path d="M788.6 525.8 L795.1 524.1 L798.6 530.6 L791.6 533.3z" fill="#d2ecc0"/>
<path d="M766.3 651.0 L784.8 635.6 L808.3 651.0 L794.7 669.8 L767.1 656.6z" fill="#3f8d3c" stroke="#2c6a2c" stroke-width="0.7"/>
<path d="M780.5 629.1 L803.9 611.1 L815.7 619.2 L831.9 614.6 L843.3 635.6 L820.9 663.2 L803.4 647.0 L792.5 640.0z" fill="#f6f3e6" stroke="#6a6a62" stroke-width="0.7"/>
<path d="M781.1 629.5 L803.9 612.0 L812.2 621.6 L794.7 640.0z" fill="#efe3b0" opacity=".9"/>
<path d="M790.8 622.5 L797.3 620.8 L800.4 629.1 L793.8 631.3z" fill="#6aa84a" opacity=".85"/>
<path d="M805.6 631.3 L814.4 626.9 L821.4 633.5 L814.4 640.0z" fill="#c9b88a" opacity=".7"/>
<path d="M812.2 621.6 L821.4 653.1 M805.6 644.4 L831.9 622.5 M807.8 651.0 L836.3 631.3" stroke="#77776e" stroke-width="0.6" fill="none"/>
<path d="M836.3 648.8 L849.4 629.1 L869.5 643.5 L847.6 656.6 L841.9 658.0z" fill="#fbfbf8" stroke="#6c6c68" stroke-width="0.7"/>
<path d="M748.8 624.7 L760.8 636.1" stroke="#6f7d34" stroke-width="2" stroke-linecap="round" fill="none"/>
</g></svg>
<div class="a" style="left:59.5px;top:798px;width:1220.5px;height:1px;background:#c9c9c9;"></div>
<div class="a" style="left:67.50px;top:805.20px;font-size:10.4px;line-height:10.4px;color:#5e5e5e;transform:scaleX(0.9563);transform-origin:0 0;">Κάντε κλικ για να προσθέσετε σημειώσεις</div>
<div class="a" style="left:0px;top:830.4px;width:1280px;height:14.8px;background:#f3f3f3;border-top:1px solid #dedede"></div>
<div class="a" style="left:8.00px;top:835.23px;font-size:8px;line-height:8px;color:#3a3a3a;transform:scaleX(0.9695);transform-origin:0 0;">Διαφάνεια 2 από 33</div>
<svg class="a" style="left:88.5px;top:833px;" width="10" height="10" viewBox="0 0 10 10"><path d="M0.5 1 H3.8 V8.4 H0.5z M3.8 1.6 L6 1 M3.8 8.4 L7 7.6" fill="none" stroke="#666" stroke-width="0.8"/><path d="M5.6 6 L8.8 1.4 L9.6 2 L6.4 6.6 L5.3 7z" fill="none" stroke="#666" stroke-width="0.7"/></svg>
<div class="a" style="left:109.50px;top:835.23px;font-size:8px;line-height:8px;color:#3a3a3a;transform:scaleX(0.9349);transform-origin:0 0;">Ελληνικά</div>
<svg class="a" style="left:150px;top:833px;" width="11" height="10" viewBox="0 0 11 10"><circle cx="5.2" cy="1.6" r="1.1" fill="#333"/><path d="M1.5 3.6 L5.2 4.4 L8.9 3.6 M5.2 4.4 V6.2 L3 9.4 M5.2 6.2 L7.4 9.4" fill="none" stroke="#333" stroke-width="1"/><path d="M3.8 0.8 A4.6 4.6 0 0 0 2.4 8" fill="none" stroke="#666" stroke-width="0.7"/></svg>
<div class="a" style="left:162.50px;top:835.23px;font-size:8px;line-height:8px;color:#333;font-weight:700;transform:scaleX(0.9466);transform-origin:0 0;">Προσβασιμότητα: Διερεύνηση</div>
<div class="a" style="left:636.8px;top:829.8px;width:162.2px;height:15.4px;background:#24d75b;border-radius:3.5px 0 0 0"></div>
<div class="a" style="left:798.8px;top:829.8px;width:63.6px;height:15.4px;background:#e02a2c;border-radius:0 3.5px 0 0"></div>
<svg class="a" style="left:645.5px;top:834.6px;" width="7" height="8" viewBox="0 0 7 8"><path d="M1.2 0.4 L2.8 0.4 L3.2 2.6 L2.2 3.3 C2.6 4.6 3.4 5.6 4.6 6.1 L5.4 5.2 L6.8 5.9 L6.6 7.4 C3.6 8 0.4 4 1.2 0.4z" fill="#0d5a24"/></svg>
<div class="a" style="left:674.10px;top:834.56px;font-size:8.2px;line-height:8.2px;color:#0c4a1e;font-weight:700;transform:scaleX(0.9228);transform-origin:0 0;">You are screen sharing</div>
<svg class="a" style="left:784px;top:834.8px;" width="7" height="8.4" viewBox="0 0 7 8.4"><path d="M3.5 0.2 L6.8 1.4 V4 C6.8 6.2 5.2 7.6 3.5 8.2 C1.8 7.6 0.2 6.2 0.2 4 V1.4z" fill="#0d5a24"/><path d="M2 4.2 L3.1 5.3 L5.1 3" fill="none" stroke="#24d75b" stroke-width="0.9"/></svg>
<div class="a" style="left:803.8px;top:833.4px;width:5.7px;height:5.9px;background:#eef6ff;"></div>
<div class="a" style="left:813.40px;top:834.56px;font-size:8.2px;line-height:8.2px;color:#fff;font-weight:700;transform:scaleX(0.8508);transform-origin:0 0;">Stop share</div>
<svg class="a" style="left:928px;top:834px;" width="9" height="8" viewBox="0 0 9 8"><path d="M4.5 0 L6.2 2 H2.8z" fill="#555"/><path d="M0 3.5 H9 M0 5.5 H9 M0 7.5 H6" stroke="#666" stroke-width="0.9"/></svg>
<div class="a" style="left:939.40px;top:835.23px;font-size:8px;line-height:8px;color:#3a3a3a;transform:scaleX(0.9564);transform-origin:0 0;">Σημειώσεις</div>
<svg class="a" style="left:990.4px;top:833.6px;" width="10" height="8.6" viewBox="0 0 10 8.6"><path d="M0.3 0.3 H9.5 V5.8 H3.8 L1.8 8.2 V5.8 H0.3z" fill="#555"/></svg>
<div class="a" style="left:1001.90px;top:835.23px;font-size:8px;line-height:8px;color:#3a3a3a;transform:scaleX(0.9522);transform-origin:0 0;">Σχόλια</div>
<div class="a" style="left:1037.4px;top:831px;width:26.3px;height:14.2px;background:#c6c6c6;"></div>
<svg class="a" style="left:1045.8px;top:833.3px;" width="9.6" height="8.4" viewBox="0 0 9.6 8.4"><rect x="0.4" y="0.4" width="8.8" height="7.6" fill="none" stroke="#555" stroke-width="0.8"/><path d="M2.4 0.4 V8 M2.4 5.8 H9.2" stroke="#555" stroke-width="0.8"/><rect x="4.4" y="1.8" width="2.6" height="2" fill="none" stroke="#555" stroke-width="0.6"/></svg>
<svg class="a" style="left:1072.6px;top:833.6px;" width="9.6" height="8.4" viewBox="0 0 9.6 8.4"><g fill="none" stroke="#666" stroke-width="0.8"><rect x="0.4" y="0.4" width="3.2" height="2.6"/><rect x="5.6" y="0.4" width="3.2" height="2.6"/><rect x="0.4" y="5" width="3.2" height="2.6"/><rect x="5.6" y="5" width="3.2" height="2.6"/></g></svg>
<svg class="a" style="left:1099.2px;top:833.4px;" width="8.8" height="7.8" viewBox="0 0 8.8 7.8"><path d="M0.4 0.8 L3.9 0.2 V7 L0.4 6.4z M8.4 0.8 L4.9 0.2 V7 L8.4 6.4z" fill="#d8d8d8" stroke="#666" stroke-width="0.8"/></svg>
<svg class="a" style="left:1126.2px;top:833.8px;" width="8.6" height="8.4" viewBox="0 0 8.6 8.4"><path d="M0 0.5 H8.6" stroke="#666" stroke-width="0.9"/><path d="M1 0.8 V4.6 H7.6 V0.8" fill="none" stroke="#666" stroke-width="0.8"/><path d="M4.3 4.6 V7 M2.4 7.6 H6.2" stroke="#666" stroke-width="0.8"/></svg>
<div class="a" style="left:1148.2px;top:837.3px;width:4.8px;height:0.9px;background:#444;"></div>
<div class="a" style="left:1156.8px;top:837.4px;width:66px;height:0.8px;background:#555;"></div>
<div class="a" style="left:1191px;top:834.6px;width:3.6px;height:7px;background:#3c3c3c;"></div>
<svg class="a" style="left:1226.5px;top:835.3px;" width="5" height="5" viewBox="0 0 5 5"><path d="M0 2.5 H5 M2.5 0 V5" stroke="#444" stroke-width="0.8"/></svg>
<div class="a" style="left:1241.10px;top:835.23px;font-size:8px;line-height:8px;color:#3a3a3a;transform:scaleX(0.8504);transform-origin:0 0;">124%</div>
<svg class="a" style="left:1267.2px;top:833.4px;" width="8.8" height="8.8" viewBox="0 0 8.8 8.8"><rect x="0.4" y="0.4" width="8" height="8" fill="none" stroke="#555" stroke-width="0.8"/><path d="M2 3.2 V2 H3.2 M5.6 2 H6.8 V3.2 M6.8 5.6 V6.8 H5.6 M3.2 6.8 H2 V5.6" fill="none" stroke="#555" stroke-width="0.8"/></svg>
<div class="a" style="left:0px;top:845.3px;width:1280px;height:26.7px;background:#3b3e47;"></div>
<div class="a" style="left:0px;top:845.3px;width:32px;height:26.7px;background:#323846;"></div>
<svg class="a" style="left:10.5px;top:853px;" width="11.4" height="11.4" viewBox="0 0 11.4 11.4"><path d="M0 1.6 L4.9 0.9 V5.4 H0z M5.6 0.8 L11.4 0 V5.4 H5.6z M0 6.1 H4.9 V10.6 L0 9.9z M5.6 6.1 H11.4 V11.4 L5.6 10.6z" fill="#fff"/></svg>
<div class="a" style="left:32px;top:845.3px;width:192px;height:26.7px;background:#f3f3f3;border-top:1px solid #d0d0d0"></div>
<svg class="a" style="left:39.8px;top:852.4px;" width="11" height="12" viewBox="0 0 11 12"><circle cx="6.5" cy="4.3" r="3.9" fill="none" stroke="#222" stroke-width="0.95"/><path d="M3.8 7.2 L0.5 11.3" stroke="#222" stroke-width="1.1"/></svg>
<div class="a" style="left:58.80px;top:855.08px;font-size:10.3px;line-height:10.3px;color:#3a3a3a;letter-spacing:0.120px;">Αναζήτηση</div>
<svg class="a" style="left:233.7px;top:853.2px;" width="12.4" height="10.2" viewBox="0 0 12.4 10.2"><g fill="none" stroke="#e4e4e4" stroke-width="1"><rect x="2.2" y="2.6" width="6" height="5"/><path d="M0.5 0.4 V9.8 M2 0.6 H8.4 M2 9.6 H8.4"/><path d="M11 0.4 V3 M11 4.6 V6 M11 7.6 V9.8" stroke-width="1.3"/></g></svg>
<svg class="a" style="left:265.9px;top:850.8px;" width="16.4" height="15.4" viewBox="0 0 16.4 15.4"><path d="M0.3 6 L8.2 0.3 L16.1 6 V15.2 H0.3z" fill="#1f7fd6"/><path d="M0.3 6 H16.1 L8.2 11.4z" fill="#fff"/><path d="M0.3 15.2 L8.2 10 L16.1 15.2z" fill="#4aa8f0"/></svg>
<svg class="a" style="left:298.6px;top:851px;" width="16.4" height="16" viewBox="0 0 16.4 16"><defs><linearGradient id="ed1" x1="0" y1="0" x2="0" y2="1"><stop offset="0" stop-color="#2aa6e4"/><stop offset="1" stop-color="#154fae"/></linearGradient><linearGradient id="ed2" x1="0" y1="1" x2="1" y2="0"><stop offset="0" stop-color="#2bb6dc"/><stop offset="1" stop-color="#55d86a"/></linearGradient></defs><circle cx="8.2" cy="8" r="7.8" fill="url(#ed1)"/><path d="M5 1 C10.4 -1.2 16.6 2.6 16 8.6 C15.6 11.2 12.8 11.8 11.2 10.4 C12.6 7.4 10.6 4.6 7.8 4.6 C5 4.6 2.6 6.2 1 9.6 C-0.2 6 1.6 2.4 5 1z" fill="url(#ed2)"/><path d="M4.6 8 C4.2 12.2 8.4 15 12.8 13.4 C10.8 16 6 16.2 3.8 13.6 C2.4 11.8 3 9.2 4.6 8z" fill="#0f3c8c"/></svg>
<svg class="a" style="left:331px;top:851.4px;" width="15.8" height="15.4" viewBox="0 0 15.8 15.4"><path d="M4.6 4 V2.4 C4.6 0.2 11.2 0.2 11.2 2.4 V4" fill="none" stroke="#3aa0e8" stroke-width="1.2"/><path d="M0.6 3.8 H15.2 V13 C15.2 14.4 14.4 15.2 13 15.2 H2.8 C1.4 15.2 0.6 14.4 0.6 13z" fill="#f4f4f4"/><rect x="5" y="6.2" width="2.7" height="2.7" fill="#f25022"/><rect x="8.2" y="6.2" width="2.7" height="2.7" fill="#7fba00"/><rect x="5" y="9.4" width="2.7" height="2.7" fill="#00a4ef"/><rect x="8.2" y="9.4" width="2.7" height="2.7" fill="#ffb900"/></svg>
<svg class="a" style="left:364.2px;top:851px;" width="16" height="16" viewBox="0 0 16 16"><circle cx="7.8" cy="7.8" r="7.6" fill="#e8453c"/><path d="M7.8 7.8 L1.2 4 A7.6 7.6 0 0 0 5.6 15 z" fill="#2f9e4f"/><path d="M7.8 7.8 L5.6 15 A7.6 7.6 0 0 0 14.4 4 H7.8z" fill="#f6c431"/><circle cx="7.8" cy="7.8" r="3.4" fill="#fff"/><circle cx="7.8" cy="7.8" r="2.7" fill="#4a8af4"/><circle cx="11.6" cy="12" r="4" fill="#23272e"/><path d="M9 12 A2.6 2.6 0 0 1 14.2 12 M14.2 12.6 A2.6 2.6 0 0 1 9.4 13.4" fill="none" stroke="#dfe6f0" stroke-width="1.1"/></svg>
<div class="a" style="left:359px;top:870.4px;width:26px;height:1.6px;background:#8db7ea;"></div>
<svg class="a" style="left:396.6px;top:850.6px;" width="16.4" height="16" viewBox="0 0 16.4 16"><path d="M8.4 3 C4.8 3 2.4 5.6 2.4 9 C2.4 12.4 5 14.8 8.4 14.8 C11 14.8 13 13.4 13.8 11.2 H10.8 C10.2 12 9.4 12.4 8.4 12.4 C6.8 12.4 5.6 11.4 5.4 9.8 H14.2 C14.6 5.8 12 3 8.4 3z M5.5 7.8 C5.8 6.4 6.9 5.4 8.4 5.4 C9.9 5.4 11 6.4 11.2 7.8z" fill="#35b8f0"/><path d="M1 13.6 C-0.8 10 4 3 11.6 1.2 C14.8 0.4 16.4 1.8 15.2 4.4" fill="none" stroke="#f4c21f" stroke-width="1.3"/></svg>
<svg class="a" style="left:429.6px;top:852px;" width="15.2" height="12.8" viewBox="0 0 15.2 12.8"><path d="M0.2 1.4 C0.2 0.6 0.6 0.2 1.4 0.2 H5.6 L7 1.8 H14 C14.8 1.8 15 2.2 15 3 V12.6 H0.2z" fill="#f0b429"/><rect x="0.2" y="3.4" width="14.8" height="9.2" fill="#fbd75c"/><path d="M3 12.6 V8.4 H12.2 V12.6 H10 V10.4 H5.2 V12.6z" fill="#3a8fe0"/></svg>
<svg class="a" style="left:461.8px;top:850.8px;" width="16.2" height="16" viewBox="0 0 16.2 16"><path d="M7.6 3 C3.4 3 0.4 6 0.4 9.4 C0.4 12.6 3 14.6 6 14.6 C7.6 14.6 7.6 13.2 7 12.4 C6.4 11.4 7 10.4 8.4 10.4 H11 C13.4 10.4 14.4 8.8 14.4 7.4 C14.4 5 11.6 3 7.6 3z" fill="#b9c6d8"/><circle cx="4" cy="7" r="1.2" fill="#e2483a"/><circle cx="7.4" cy="5.4" r="1.2" fill="#3fae4a"/><circle cx="3.6" cy="10.6" r="1.2" fill="#3a7fe0"/><circle cx="10.8" cy="6" r="1.1" fill="#f1c232"/><path d="M15.6 0.4 L8.6 12.8 L7.6 15.4 L9.8 13.6 L16 1z" fill="#d9892b"/><path d="M14.6 0.2 L16.2 1.2 L15.2 3 L13.6 2z" fill="#c8cdd6"/></svg>
<svg class="a" style="left:494.6px;top:851.4px;" width="16.2" height="14.8" viewBox="0 0 16.2 14.8"><rect x="4.4" y="0.2" width="11.6" height="14.4" rx="1" fill="#2b7cd3"/><rect x="4.4" y="0.2" width="11.6" height="3.7" fill="#41a5ee"/><rect x="4.4" y="7.4" width="11.6" height="3.6" fill="#185abd"/><rect x="4.4" y="11" width="11.6" height="3.6" fill="#103f91"/><rect x="0.2" y="3.2" width="8.6" height="8.6" rx="0.8" fill="#185abd"/><path d="M2 5.2 L3.2 9.8 L4.5 6.2 L5.8 9.8 L7 5.2" fill="none" stroke="#fff" stroke-width="1"/></svg>
<div class="a" style="left:519.2px;top:845.3px;width:32px;height:26.7px;background:#63666c;"></div>
<div class="a" style="left:519.2px;top:870.4px;width:32px;height:1.6px;background:#8fc8f4;"></div>
<svg class="a" style="left:527px;top:851.2px;" width="16.6" height="15.2" viewBox="0 0 16.6 15.2"><circle cx="9.4" cy="7.6" r="7.2" fill="#ed6c47"/><path d="M9.4 0.4 A7.2 7.2 0 0 1 16.6 7.6 H9.4z" fill="#ff8f6b"/><path d="M2.2 7.6 H16.6 A7.2 7.2 0 0 1 2.2 7.6z" fill="#d35230"/><rect x="0.2" y="3.4" width="8.4" height="8.4" rx="0.8" fill="#c43e1c"/><path d="M3.2 10 V5.4 H5 C6.8 5.4 6.8 8 5 8 H3.2" fill="none" stroke="#fff" stroke-width="1.1"/></svg>
<svg class="a" style="left:560.2px;top:851.2px;" width="16" height="15.2" viewBox="0 0 16 15.2"><rect x="0.2" y="0.2" width="15.6" height="14.8" rx="6" fill="#0b5cff"/></svg>
<div class="a" style="left:562.90px;top:854.32px;font-size:8.6px;line-height:8.6px;color:#fff;font-weight:700;transform:scaleX(0.8963);transform-origin:0 0;">zm</div>
<div class="a" style="left:554.7px;top:870.4px;width:21.3px;height:1.6px;background:#8db7ea;"></div>
<div class="a" style="left:577px;top:870.4px;width:4px;height:1.6px;background:#8db7ea;"></div>
<svg class="a" style="left:592.8px;top:851px;" width="15.8" height="16" viewBox="0 0 15.8 16"><ellipse cx="7.9" cy="8" rx="7.4" ry="7.8" fill="#f01428"/><ellipse cx="7.9" cy="8" rx="3.5" ry="5.7" fill="#3b3e47"/></svg>
<div class="a" style="left:587px;top:870.4px;width:26.8px;height:1.6px;background:#8db7ea;"></div>
<svg class="a" style="left:973px;top:850.6px;" width="15.2" height="18" viewBox="0 0 15.2 18"><g fill="#f7931e"><ellipse cx="7.6" cy="8.6" rx="6.2" ry="2.6" fill="#e27c10"/><ellipse cx="7.6" cy="7.4" rx="6.2" ry="2.6"/><ellipse cx="9" cy="5.2" rx="6" ry="2.5" fill="#e27c10"/><ellipse cx="9" cy="4.2" rx="6" ry="2.5"/><ellipse cx="6.4" cy="2.6" rx="5.6" ry="2.3" fill="#ffab3d"/></g><path d="M5.2 16 L7.6 13.8 L10 16" fill="none" stroke="#5fd016" stroke-width="1.1"/></svg>
<div class="a" style="left:993.80px;top:853.53px;font-size:10px;line-height:10px;color:#ececec;transform:scaleX(0.8532);transform-origin:0 0;">USD/EUR</div>
<div class="a" style="left:1039.00px;top:853.53px;font-size:10px;line-height:10px;color:#2fb62f;transform:scaleX(0.8968);transform-origin:0 0;">+1,11%</div>
<svg class="a" style="left:1086px;top:856.6px;" width="8.4" height="4.8" viewBox="0 0 8.4 4.8"><path d="M0.4 4.4 L4.2 0.6 L8 4.4" fill="none" stroke="#eee" stroke-width="1.1"/></svg>
<svg class="a" style="left:1102.4px;top:853px;" width="8.4" height="11.4" viewBox="0 0 8.4 11.4"><rect x="0.8" y="3.4" width="4.8" height="4.6" rx="0.8" fill="none" stroke="#e6e6e6" stroke-width="0.9"/><path d="M5.6 5 L7.8 3.8 V7.6 L5.6 6.4" fill="none" stroke="#e6e6e6" stroke-width="0.8"/><path d="M1.4 1.6 C2.6 0 5 0 6.2 1.6 M1.4 9.8 C2.6 11.4 5 11.4 6.2 9.8" fill="none" stroke="#e6e6e6" stroke-width="0.8"/></svg>
<svg class="a" style="left:1115.2px;top:853.2px;" width="12" height="11" viewBox="0 0 12 11"><circle cx="5.2" cy="5" r="4.6" fill="#dfe3e6"/><path d="M2.6 2 C4 3 5.4 2.6 6.6 1.2 M1 6 C3 5.4 4.2 7 3.4 9" fill="none" stroke="#3aa14a" stroke-width="1.2"/><circle cx="8.6" cy="7.6" r="3" fill="#2a2d33"/><circle cx="8.6" cy="7.6" r="1.6" fill="#cfd6e0"/></svg>
<svg class="a" style="left:1132px;top:854px;" width="11.6" height="9.8" viewBox="0 0 11.6 9.8"><rect x="2.6" y="0.5" width="8.4" height="6" fill="none" stroke="#e6e6e6" stroke-width="0.9"/><path d="M0.6 0 V6 M0 1.8 H2 M5 9 H9 M7 6.6 V9" stroke="#e6e6e6" stroke-width="0.9"/><rect x="4.4" y="7.4" width="4.4" height="2" fill="#e6e6e6"/></svg>
<svg class="a" style="left:1148px;top:854px;" width="12" height="9.6" viewBox="0 0 12 9.6"><path d="M0.4 3.2 H2.4 L5 0.6 V9 L2.4 6.4 H0.4z" fill="none" stroke="#e6e6e6" stroke-width="0.9"/><path d="M6.6 3 C7.4 4 7.4 5.6 6.6 6.6 M8.4 1.6 C10 3.4 10 6.2 8.4 8 M10 0.6 C12.2 3 12.2 6.6 10 9" fill="none" stroke="#e6e6e6" stroke-width="0.8"/></svg>
<svg class="a" style="left:1165px;top:854px;" width="11" height="10.4" viewBox="0 0 11 10.4"><g fill="#e6e6e6"><rect x="0.4" y="0.6" width="3" height="1.8"/><rect x="5" y="0.6" width="3" height="1.8"/><rect x="0.4" y="4" width="3" height="1.8"/><rect x="5" y="4" width="3" height="1.8"/><rect x="2.6" y="7.2" width="3" height="1.6"/></g><circle cx="7.6" cy="7.4" r="2.9" fill="#e81123"/><path d="M6.4 6.2 L8.8 8.6 M8.8 6.2 L6.4 8.6" stroke="#fff" stroke-width="0.7"/></svg>
<div class="a" style="left:1182.20px;top:854.25px;font-size:8.8px;line-height:8.8px;color:#ececec;transform:scaleX(0.7869);transform-origin:0 0;">ENG</div>
<div class="a" style="left:1210.60px;top:848.45px;font-size:8.8px;line-height:8.8px;color:#ececec;transform:scaleX(0.8619);transform-origin:0 0;">5:09 μμ</div>
<div class="a" style="left:1208.10px;top:859.85px;font-size:8.8px;line-height:8.8px;color:#ececec;transform:scaleX(0.8761);transform-origin:0 0;">3/2/2025</div>
<svg class="a" style="left:1252.6px;top:853.4px;" width="17" height="16" viewBox="0 0 17 16"><path d="M0.4 0.4 H10.4 V7.6 H3 L0.4 9.8z" fill="#f2f2f2"/><path d="M2 2.4 H8.8 M2 4 H8.8 M2 5.6 H8.8" stroke="#3b3e47" stroke-width="0.7"/><circle cx="10.6" cy="9.8" r="5" fill="#2a2d33" stroke="#8a8d93" stroke-width="0.6"/></svg>
<div class="a" style="left:1260.90px;top:855.89px;font-size:8.4px;line-height:8.4px;color:#fff;">6</div>
<div class="a" style="left:1276.3px;top:845.3px;width:0.8px;height:26.7px;background:#6d7077;"></div>
<div class="a" style="left:1268.8px;top:256px;width:11.2px;height:505px;background:#f0f0f0;"></div>
<svg class="a" style="left:1270px;top:249.5px;" width="8" height="5" viewBox="0 0 8 5"><path d="M0.4 4.4 L4 0.8 L7.6 4.4" fill="none" stroke="#555" stroke-width="0.9"/></svg>
<div class="a" style="left:1268.6px;top:258.2px;width:11px;height:9.4px;background:#fff;border:1px solid #ababab"></div>
<svg class="a" style="left:1271.6px;top:261px;" width="5" height="3.4" viewBox="0 0 5 3.4"><path d="M0 3.2 L2.5 0.2 L5 3.2z" fill="#222"/></svg>
<div class="a" style="left:1268.6px;top:289.6px;width:11px;height:11px;background:#fff;border:1px solid #ababab"></div>
<div class="a" style="left:1268.6px;top:750.4px;width:11px;height:9.6px;background:#fff;border:1px solid #ababab"></div>
<svg class="a" style="left:1271.6px;top:753.8px;" width="5" height="3.4" viewBox="0 0 5 3.4"><path d="M0 0.2 L2.5 3.2 L5 0.2z" fill="#222"/></svg>
<svg class="a" style="left:1270.6px;top:763.2px;" width="7" height="8" viewBox="0 0 7 8"><path d="M3.5 0.2 L6.4 3.6 H0.6z M3.5 2.8 L6.8 6.6 H0.2z M0.4 6.2 H6.6 V7.4 H0.4z" fill="#5a5a5a"/></svg>
<svg class="a" style="left:1270.6px;top:774.4px;" width="7" height="8" viewBox="0 0 7 8"><path d="M3.5 7.6 L6.4 4.2 H0.6z M3.5 5 L6.8 1.2 H0.2z M0.4 0.4 H6.6 V1.6 H0.4z" fill="#5a5a5a"/></svg>
<div class="a" style="left:1112.3px;top:243.3px;width:152.6px;height:515.2px;background:#1c1c1c;border-radius:2.5px;box-shadow:0 1px 3px rgba(0,0,0,.45)"></div>
<div class="a" style="left:1113.0px;top:244.20000000000002px;width:151.1px;height:85.5px;background:#7db92a;"></div>
<svg class="a" style="left:1113.6px;top:244.8px;overflow:hidden" width="150.1" height="84.3" viewBox="1113.6 244.8 150.1 84.3">
<defs><filter id="b1" x="-20%" y="-20%" width="140%" height="140%"><feGaussianBlur stdDeviation="0.9"/></filter><filter id="b2" x="-20%" y="-20%" width="140%" height="140%"><feGaussianBlur stdDeviation="1.8"/></filter>
<linearGradient id="wl1" x1="0" y1="0" x2="1" y2="0"><stop offset="0" stop-color="#cdeaf4"/><stop offset="1" stop-color="#e2f8fc"/></linearGradient></defs>
<rect x="1113" y="244" width="152" height="86" fill="url(#wl1)"/>
<g filter="url(#b1)">
<rect x="1113" y="244" width="38" height="86" fill="#c6b07c"/>
<rect x="1114" y="246" width="19" height="50" fill="#2d3434"/>
<rect x="1114" y="245" width="14" height="6" fill="#c9a7b8"/><rect x="1119" y="245" width="4" height="6" fill="#7ac0d6"/>
<rect x="1113" y="251.5" width="20" height="2.6" fill="#b79a62"/>
<rect x="1122" y="255" width="3" height="14" fill="#d8dde2"/><rect x="1126" y="254" width="3" height="15" fill="#e8e0e0"/><rect x="1116" y="256" width="3" height="13" fill="#3d6a6a"/>
<rect x="1113" y="269.5" width="20" height="3" fill="#b79a62"/>
<rect x="1115" y="275" width="3" height="18" fill="#2f8a8a"/><rect x="1124" y="274" width="2.4" height="20" fill="#dfe4e6"/><rect x="1127.5" y="274" width="2" height="20" fill="#f0f0f0"/><rect x="1119" y="276" width="3" height="17" fill="#49604a"/>
<rect x="1113" y="295.5" width="22" height="35" fill="#c9b27c"/>
<rect x="1133" y="244" width="17" height="86" fill="#c8b486"/>
<rect x="1149.2" y="244" width="1.6" height="86" fill="#8f9aa0"/>
</g>
<g filter="url(#b1)">
<path d="M1209 278 H1236 C1238 278 1238.5 280 1238.5 283 V301 H1209z" fill="#16171a"/>
<path d="M1222 301 H1246 C1250 301 1251 304 1250 309 L1246 330 H1218z" fill="#141518"/>
<path d="M1212 282 H1234 M1212 285.5 H1234 M1212 289 H1234 M1213 293 H1233 M1214 296.5 H1232" stroke="#7f96c8" stroke-width="1.3" opacity=".8"/>
<path d="M1226 306 L1243 304 M1226 310 L1243 308 M1227 314 L1242 312 M1228 318 L1241 316 M1229 322 L1240 320" stroke="#aab4c8" stroke-width="1.2" opacity=".75"/>
</g>
<g filter="url(#b1)">
<path d="M1148 330 C1150 316 1160 307 1172 304 L1204 304 C1220 307 1236 316 1240 330z" fill="#4f5563"/>
<path d="M1150 330 C1152 320 1158 312 1166 308 M1160 330 L1166 316 M1172 326 L1170 312 M1208 312 L1214 328 M1216 310 L1226 328 M1224 314 L1234 328 M1156 322 L1164 324 M1204 318 L1212 316 M1214 322 L1222 320" stroke="#e8ecf2" stroke-width="2.2" opacity=".8"/>
<path d="M1155 326 L1160 318 M1166 328 L1170 320 M1176 330 L1175 318 M1206 326 L1203 314 M1218 328 L1212 318 M1230 328 L1224 320" stroke="#15161a" stroke-width="2" opacity=".85"/>
<path d="M1152 328 L1157 320 M1162 314 L1168 310 M1170 322 L1176 316 M1180 328 L1182 320 M1200 322 L1206 310 M1208 328 L1210 320 M1220 318 L1228 324 M1232 322 L1238 329 M1196 314 L1200 308" stroke="#f2f4f8" stroke-width="1.8" opacity=".8"/>
<path d="M1178 306 L1188 330 L1199 306z" fill="#d9b7a4"/>
<path d="M1162 296 C1157 286 1159 272 1166 266 C1170 259 1180 256.5 1189 257 C1198 256.5 1206 260 1208.5 268 C1213 276 1212 288 1209.5 297 C1211 303 1207 309 1201 309 L1174 309 C1165 308 1162 302 1162 296z" fill="#17171c"/>
<ellipse cx="1188" cy="287.5" rx="14.6" ry="21.5" fill="#dcb9a6"/>
<path d="M1173.6 282 C1173 268 1180 263.5 1189 264.5 C1198 264 1203 270 1202.4 282 C1199 272 1194 268.5 1188 269 C1181 268.5 1176 273 1173.6 282z" fill="#17171c"/>
<path d="M1179 285 H1185 M1192 285 H1198" stroke="#5a4238" stroke-width="1.1"/>
<ellipse cx="1189" cy="298.5" rx="4.2" ry="1.5" fill="#b0506a"/>
<path d="M1188 287 V293" stroke="#c49c8a" stroke-width="1.4"/>
</g>
</svg>
<div class="a" style="left:1114.7px;top:316.4px;width:65.8px;height:12.7px;background:rgba(58,58,58,.82);"></div>
<div class="a" style="left:1117.00px;top:318.63px;font-size:9.3px;line-height:9.3px;color:#fff;transform:scaleX(0.9264);transform-origin:0 0;">diavlos lakonias</div>
<svg class="a" style="left:1113.6px;top:330.6px;overflow:hidden" width="150.1" height="84.3" viewBox="1113.6 330.6 150.1 84.3">
<defs><linearGradient id="wl2" x1="0" y1="0" x2="1" y2="0"><stop offset="0" stop-color="#e2dedf"/><stop offset="0.55" stop-color="#f1efef"/><stop offset="1" stop-color="#ebe8e8"/></linearGradient>
<radialGradient id="sk2" cx="0.5" cy="0.22" r="0.75"><stop offset="0" stop-color="#edd0c2"/><stop offset="0.5" stop-color="#ddb2a0"/><stop offset="1" stop-color="#c79683"/></radialGradient></defs>
<rect x="1113" y="330" width="152" height="86" fill="url(#wl2)"/>
<g filter="url(#b1)">
<path d="M1170 416 L1171 400 C1174 397 1180 396 1184 399 L1188 416z" fill="#dcb450"/>
<path d="M1226 416 L1228 405 L1233 405 L1234 416z" fill="#dcb450"/>
<path d="M1174 400 C1178 395 1186 397 1188 404 L1188 416 L1176 416z" fill="#26262a"/>
<path d="M1212 416 L1213 404 C1220 398 1229 401 1229 409 L1227 416z" fill="#232327"/>
<rect x="1184" y="392" width="28" height="24" fill="#c4937f"/>
<path d="M1176 362 C1176 346 1185 338 1198 338 C1211 338 1220 346 1220 362 L1221 376 C1220 392 1212 404 1198 404 C1186 404 1178 392 1176.4 376z" fill="url(#sk2)"/>
<ellipse cx="1177" cy="374" rx="2" ry="5" fill="#d2a28f"/><ellipse cx="1220.5" cy="374" rx="2" ry="5" fill="#d2a28f"/>
<path d="M1176.5 365.5 H1219" stroke="#4a4240" stroke-width="0.9"/>
<rect x="1179.5" y="363" width="15" height="7.5" rx="2.5" fill="#cfa898" stroke="#5a504c" stroke-width="0.8"/>
<rect x="1201" y="363" width="15" height="7.5" rx="2.5" fill="#c8b096" stroke="#5a504c" stroke-width="0.8"/>
<path d="M1183 366.5 H1191 M1204.5 366.5 H1212.5" stroke="#5c4a44" stroke-width="1.2"/>
<path d="M1198 368 V378" stroke="#c99c8a" stroke-width="2.2"/>
<path d="M1191 385.5 C1195 384.3 1201 384.3 1205 385.5" stroke="#a86f66" stroke-width="1.6" fill="none"/>
</g>
</svg>
<div class="a" style="left:1114.8px;top:402px;width:97px;height:12.6px;background:rgba(70,70,70,.84);"></div>
<div class="a" style="left:1116.60px;top:404.51px;font-size:9.2px;line-height:9.2px;color:#fff;transform:scaleX(0.8786);transform-origin:0 0;">ΠΑΝΑΓΙΩΤΗΣ ΣΥΛΛΑΙΟΣ</div>
<div class="a" style="left:1113.6px;top:415.6px;width:150.1px;height:85.2px;background:#222;"></div>
<div class="a" style="left:1146.10px;top:454.10px;font-size:10.4px;line-height:10.4px;color:#fff;font-weight:700;">ΣΙΔΗΡΟΠΟΥΛΟ...</div>
<div class="a" style="left:1114.5px;top:487.20000000000005px;width:125.40000000000009px;height:13px;background:#2f2f2f;"></div>
<svg class="a" style="left:1115.8px;top:488.8px;" width="9" height="10" viewBox="0 0 9 10"><path d="M3.6 0.6 C2.6 0.6 2.2 1.4 2.2 2.2 V4.6 C2.2 6.4 5 6.4 5 4.6 V2.2 C5 1.4 4.6 0.6 3.6 0.6z" fill="#e04848"/><path d="M0.9 4.4 C0.9 8 6.3 8 6.3 4.4 M3.6 7.2 V9 M2.2 9.2 H5" fill="none" stroke="#e04848" stroke-width="1"/><path d="M0.4 9.6 L8.4 0.4" stroke="#e04848" stroke-width="1.2"/></svg>
<div class="a" style="left:1128.60px;top:489.81px;font-size:9.2px;line-height:9.2px;color:#fff;transform:scaleX(0.8770);transform-origin:0 0;">ΣΙΔΗΡΟΠΟΥΛΟΣ ΘΕΟΦΙΛΟΣ</div>
<div class="a" style="left:1113.6px;top:500.9px;width:150.1px;height:85.2px;background:#222;"></div>
<div class="a" style="left:1169.40px;top:539.40px;font-size:10.4px;line-height:10.4px;color:#fff;font-weight:700;transform:scaleX(0.9735);transform-origin:0 0;">matavra</div>
<div class="a" style="left:1114.5px;top:572.5px;width:48.09999999999991px;height:13px;background:#2f2f2f;"></div>
<svg class="a" style="left:1115.8px;top:574.1px;" width="9" height="10" viewBox="0 0 9 10"><path d="M3.6 0.6 C2.6 0.6 2.2 1.4 2.2 2.2 V4.6 C2.2 6.4 5 6.4 5 4.6 V2.2 C5 1.4 4.6 0.6 3.6 0.6z" fill="#e04848"/><path d="M0.9 4.4 C0.9 8 6.3 8 6.3 4.4 M3.6 7.2 V9 M2.2 9.2 H5" fill="none" stroke="#e04848" stroke-width="1"/><path d="M0.4 9.6 L8.4 0.4" stroke="#e04848" stroke-width="1.2"/></svg>
<div class="a" style="left:1128.60px;top:575.11px;font-size:9.2px;line-height:9.2px;color:#fff;transform:scaleX(0.9461);transform-origin:0 0;">matavra</div>
<div class="a" style="left:1113.6px;top:586.2px;width:150.1px;height:85.2px;background:#222;"></div>
<div class="a" style="left:1146.40px;top:624.70px;font-size:10.4px;line-height:10.4px;color:#fff;font-weight:700;transform:scaleX(0.9615);transform-origin:0 0;">ΜΥΛΩΝΑΚΟΣ  Ν...</div>
<div class="a" style="left:1114.5px;top:657.8000000000001px;width:97.90000000000009px;height:13px;background:#2f2f2f;"></div>
<svg class="a" style="left:1115.8px;top:659.4000000000001px;" width="9" height="10" viewBox="0 0 9 10"><path d="M3.6 0.6 C2.6 0.6 2.2 1.4 2.2 2.2 V4.6 C2.2 6.4 5 6.4 5 4.6 V2.2 C5 1.4 4.6 0.6 3.6 0.6z" fill="#e04848"/><path d="M0.9 4.4 C0.9 8 6.3 8 6.3 4.4 M3.6 7.2 V9 M2.2 9.2 H5" fill="none" stroke="#e04848" stroke-width="1"/><path d="M0.4 9.6 L8.4 0.4" stroke="#e04848" stroke-width="1.2"/></svg>
<div class="a" style="left:1128.60px;top:660.41px;font-size:9.2px;line-height:9.2px;color:#fff;transform:scaleX(0.9255);transform-origin:0 0;">ΜΥΛΩΝΑΚΟΣ ΝΙΚΟΣ</div>
<svg class="a" style="left:1113.6px;top:671.6px;overflow:hidden" width="150.1" height="85.3" viewBox="1113.6 671.6 150.1 85.3">
<defs><linearGradient id="wl6" x1="0" y1="0" x2="1" y2="0"><stop offset="0" stop-color="#b7b1b1"/><stop offset="0.2" stop-color="#c4bfbf"/><stop offset="0.62" stop-color="#cfcaca"/><stop offset="1" stop-color="#dedada"/></linearGradient>
<linearGradient id="dr6" x1="0" y1="0" x2="1" y2="0"><stop offset="0" stop-color="#9a6334"/><stop offset="0.25" stop-color="#b77f4c"/><stop offset="1" stop-color="#c08a58"/></linearGradient></defs>
<rect x="1113" y="671" width="152" height="87" fill="url(#wl6)"/>
<g filter="url(#b1)">
<path d="M1113 671 H1120 L1117 704 L1113 716z" fill="#6e5546"/>
<rect x="1144.5" y="671" width="61" height="87" fill="url(#dr6)"/>
<rect x="1144.5" y="671" width="6" height="87" fill="#8c5a30"/>
<path d="M1156 680 H1196 V758 M1156 680 V758" fill="none" stroke="#99663a" stroke-width="1.6"/>
<rect x="1161" y="686" width="30" height="40" fill="none" stroke="#a87242" stroke-width="1.2"/>
<rect x="1127" y="717" width="4.4" height="7" fill="#dcd6c6"/><rect x="1130" y="733" width="9" height="8" fill="#c9c5c5" stroke="#b5b0b0" stroke-width="0.6"/>
<path d="M1161 758 C1160 730 1163 704 1174 694 C1182 687 1196 687 1204 693 C1216 702 1222 726 1225 758z" fill="#2a2022"/>
<path d="M1167.5 758 C1165.5 738 1167 718 1176 708 C1182 702 1194 702 1200 708 C1207.5 716 1208.5 738 1206.5 758z" fill="#c9a391"/>
<path d="M1165 746 C1164 722 1172 706 1187 701 C1180 708 1173.5 722 1171 746z" fill="#2a2022"/>
<path d="M1210 750 C1211 724 1203 707 1187 701 C1197 710 1204.5 726 1205 750z" fill="#2a2022"/>
<path d="M1176 729.5 H1183.5 M1191.5 729.5 H1199" stroke="#3a2a2a" stroke-width="1.4"/>
<path d="M1187.5 733 V747" stroke="#b58c7c" stroke-width="2"/>
</g>
</svg>
<div class="a" style="left:1114.6px;top:743.2px;width:122.6px;height:12.8px;background:rgba(62,60,60,.84);"></div>
<div class="a" style="left:1117.00px;top:745.61px;font-size:9.2px;line-height:9.2px;color:#fff;transform:scaleX(0.9067);transform-origin:0 0;">ΕΥΑΝΘΙΑ ΕΛΙΝΑ ΜΑΝΩΛΑΤΟΥ</div>
</div>
</body></html>
